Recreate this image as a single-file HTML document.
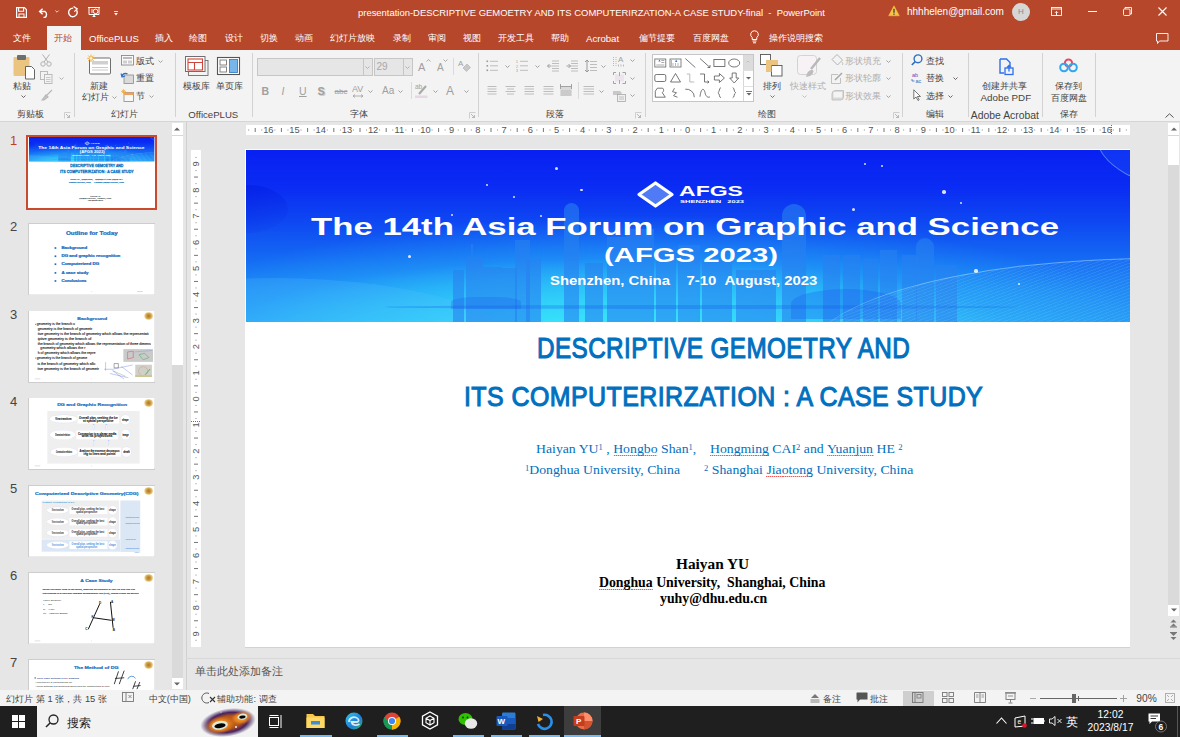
<!DOCTYPE html>
<html><head><meta charset="utf-8">
<style>
*{margin:0;padding:0;box-sizing:border-box}
html,body{width:1180px;height:737px;overflow:hidden;background:#E6E6E6;font-family:"Liberation Sans",sans-serif;position:relative}
.a{position:absolute}
.t{white-space:nowrap}
svg{overflow:visible}
sup{font-size:0.62em;vertical-align:0.42em;line-height:0}
</style></head><body>

<div class="a" style="left:0px;top:0px;width:1180px;height:50px;background:#B7472A"></div>
<svg class="a" style="left:16px;top:7px;" width="11" height="11" viewBox="0 0 11 11"><path d="M0.6 0.6H8.4L10.4 2.6V10.4H0.6Z" fill="none" stroke="#fff" stroke-width="1.2"/><path d="M2.6 0.6V4.2H7.6V0.6" fill="none" stroke="#fff" stroke-width="1.1"/><rect x="3" y="7" width="5" height="3.4" fill="none" stroke="#fff" stroke-width="1"/></svg>
<svg class="a" style="left:37.5px;top:7.5px;" width="12" height="10" viewBox="0 0 12 10"><path d="M2 3.5H7A3.6 3.6 0 0 1 7 9.4H5.5" fill="none" stroke="#fff" stroke-width="1.4"/><path d="M4.6 0.8L1.6 3.5L4.6 6.2" fill="none" stroke="#fff" stroke-width="1.4"/></svg>
<svg class="a" style="left:54.5px;top:10px;" width="4" height="3" viewBox="0 0 4 3"><path d="M0.4 0.6L2 2.2L3.6 0.6" fill="none" stroke="#fff" stroke-width="0.8"/></svg>
<svg class="a" style="left:67.5px;top:7px;" width="11" height="10" viewBox="0 0 11 10"><path d="M8.6 3.2A4.3 4.3 0 1 1 5.2 1.1" fill="none" stroke="#fff" stroke-width="1.4"/><path d="M5.6 -0.4L9.2 1.9L6.3 4.6" fill="none" stroke="#fff" stroke-width="1.2"/></svg>
<svg class="a" style="left:88px;top:7px;" width="12" height="10" viewBox="0 0 12 10"><path d="M0 0.5H12M1 0.5V7.5H11V0.5" fill="none" stroke="#fff" stroke-width="1"/><circle cx="7.6" cy="4.4" r="2.3" fill="none" stroke="#fff" stroke-width="1"/><path d="M3 3H5.5M3 5H5" stroke="#fff" stroke-width="0.9"/><path d="M4.2 10L6 7.5L7.8 10Z" fill="#fff"/></svg>
<svg class="a" style="left:113.5px;top:10.5px;" width="4" height="5" viewBox="0 0 4 5"><path d="M0 0.5H4" stroke="#fff" stroke-width="0.8"/><path d="M0.2 2L2 4.6L3.8 2Z" fill="#fff"/></svg>
<div class="a t " style="left:358px;top:6.69px;font-size:9.45px;line-height:11.81px;color:#FFFFFF;">presentation-DESCRIPTIVE GEMOETRY AND ITS COMPUTERIRZATION-A CASE STUDY-final&nbsp; -&nbsp; PowerPoint</div>
<svg class="a" style="left:888px;top:5px;" width="12" height="12" viewBox="0 0 12 12"><path d="M6 0.8L11.3 10.8H0.7Z" fill="#F6C443" stroke="#F6C443" stroke-width="0.5"/><rect x="5.4" y="3.8" width="1.2" height="4" fill="#333"/><rect x="5.4" y="8.6" width="1.2" height="1.2" fill="#333"/></svg>
<div class="a t " style="left:907px;top:6.35px;font-size:10px;line-height:12.5px;color:#FFFFFF;">hhhhelen@gmail.com</div>
<div class="a" style="left:1012px;top:2.5px;width:18px;height:18px;background:#D6D6D6;border-radius:50%"></div>
<div class="a t" style="left:1012.0px;width:18px;text-align:center;top:6.70px;font-size:8px;line-height:10.0px;color:#8A8A8A;">H</div>
<svg class="a" style="left:1051px;top:7px;" width="11" height="9" viewBox="0 0 11 9"><rect x="0.5" y="0.5" width="10" height="8" fill="none" stroke="#fff" stroke-width="0.9"/><path d="M0.5 2H10.5" stroke="#fff" stroke-width="0.9"/><path d="M5.5 8V4.5M4 5.8L5.5 4.3L7 5.8" fill="none" stroke="#fff" stroke-width="0.9"/></svg>
<div class="a" style="left:1088px;top:11px;width:9px;height:1px;background:#fff"></div>
<svg class="a" style="left:1123px;top:7px;" width="9" height="9" viewBox="0 0 9 9"><rect x="0.5" y="2" width="6.5" height="6.5" rx="1" fill="none" stroke="#fff" stroke-width="0.9"/><path d="M2 2V0.5H8.5V7H7" fill="none" stroke="#fff" stroke-width="0.9"/></svg>
<svg class="a" style="left:1158px;top:7px;" width="9" height="9" viewBox="0 0 9 9"><path d="M0.5 0.5L8.5 8.5M8.5 0.5L0.5 8.5" stroke="#fff" stroke-width="1.1"/></svg>
<div class="a" style="left:47px;top:26px;width:34px;height:24px;background:#F3F3F3"></div>
<div class="a t " style="left:13.2px;top:32.99px;font-size:9.3px;line-height:11.62px;color:#FFFFFF;">文件</div>
<div class="a t " style="left:54px;top:32.99px;font-size:9.3px;line-height:11.62px;color:#B7472A;">开始</div>
<div class="a t " style="left:89px;top:32.80px;font-size:9.6px;line-height:12.0px;color:#FFFFFF;">OfficePLUS</div>
<div class="a t " style="left:154.6px;top:32.99px;font-size:9.3px;line-height:11.62px;color:#FFFFFF;">插入</div>
<div class="a t " style="left:189.4px;top:32.99px;font-size:9.3px;line-height:11.62px;color:#FFFFFF;">绘图</div>
<div class="a t " style="left:225px;top:32.99px;font-size:9.3px;line-height:11.62px;color:#FFFFFF;">设计</div>
<div class="a t " style="left:260px;top:32.99px;font-size:9.3px;line-height:11.62px;color:#FFFFFF;">切换</div>
<div class="a t " style="left:294.5px;top:32.99px;font-size:9.3px;line-height:11.62px;color:#FFFFFF;">动画</div>
<div class="a t " style="left:330px;top:32.99px;font-size:9.3px;line-height:11.62px;color:#FFFFFF;">幻灯片放映</div>
<div class="a t " style="left:393px;top:32.99px;font-size:9.3px;line-height:11.62px;color:#FFFFFF;">录制</div>
<div class="a t " style="left:428px;top:32.99px;font-size:9.3px;line-height:11.62px;color:#FFFFFF;">审阅</div>
<div class="a t " style="left:462.5px;top:32.99px;font-size:9.3px;line-height:11.62px;color:#FFFFFF;">视图</div>
<div class="a t " style="left:497.5px;top:32.99px;font-size:9.3px;line-height:11.62px;color:#FFFFFF;">开发工具</div>
<div class="a t " style="left:551px;top:32.99px;font-size:9.3px;line-height:11.62px;color:#FFFFFF;">帮助</div>
<div class="a t " style="left:586px;top:32.80px;font-size:9.6px;line-height:12.0px;color:#FFFFFF;">Acrobat</div>
<div class="a t " style="left:638.5px;top:32.99px;font-size:9.3px;line-height:11.62px;color:#FFFFFF;">偏节提要</div>
<div class="a t " style="left:693px;top:32.99px;font-size:9.3px;line-height:11.62px;color:#FFFFFF;">百度网盘</div>
<div class="a t " style="left:769px;top:32.99px;font-size:9.3px;line-height:11.62px;color:#FFFFFF;">操作说明搜索</div>
<svg class="a" style="left:750px;top:30px;" width="9" height="14" viewBox="0 0 9 14"><path d="M4.5 0.8A3.7 3.7 0 0 1 6.8 7.5V9.5H2.2V7.5A3.7 3.7 0 0 1 4.5 0.8Z" fill="none" stroke="#fff" stroke-width="1"/><path d="M2.5 11H6.5M3 12.8H6" stroke="#fff" stroke-width="1"/></svg>
<svg class="a" style="left:1156px;top:33px;" width="13" height="11" viewBox="0 0 13 11"><path d="M0.5 0.5H12V8H3.5L1.5 10.5V8H0.5Z" fill="none" stroke="#fff" stroke-width="0.9"/></svg>
<div class="a" style="left:0px;top:50px;width:1180px;height:71px;background:#F3F3F3"></div>
<div class="a" style="left:0px;top:121px;width:1180px;height:1px;background:#D5D5D5"></div>
<div class="a" style="left:73.5px;top:53px;width:1px;height:64px;background:#D2D2D2"></div>
<div class="a" style="left:174.6px;top:53px;width:1px;height:64px;background:#D2D2D2"></div>
<div class="a" style="left:251.6px;top:53px;width:1px;height:64px;background:#D2D2D2"></div>
<div class="a" style="left:477.7px;top:53px;width:1px;height:64px;background:#D2D2D2"></div>
<div class="a" style="left:644.7px;top:53px;width:1px;height:64px;background:#D2D2D2"></div>
<div class="a" style="left:902.4px;top:53px;width:1px;height:64px;background:#D2D2D2"></div>
<div class="a" style="left:968.3px;top:53px;width:1px;height:64px;background:#D2D2D2"></div>
<div class="a" style="left:1042.4px;top:53px;width:1px;height:64px;background:#D2D2D2"></div>
<div class="a" style="left:1094.6px;top:53px;width:1px;height:64px;background:#D2D2D2"></div>
<svg class="a" style="left:12px;top:54px;" width="24" height="26" viewBox="0 0 24 26"><rect x="1.5" y="3" width="16" height="19" rx="1" fill="#EBC47F"/><rect x="5" y="1" width="9" height="5" rx="1" fill="#6E6E6E"/><path d="M13.5 12.5H19.5L22.5 15.5V25H13.5Z" fill="#fff" stroke="#555" stroke-width="0.9"/></svg>
<div class="a t " style="left:13px;top:80.99px;font-size:9.3px;line-height:11.62px;color:#444444;">粘贴</div>
<svg class="a" style="left:20.5px;top:95.0px;" width="5" height="3" viewBox="0 0 5 3"><path d="M0.5 0.5L2.5 2.5L4.5 0.5" fill="none" stroke="#555" stroke-width="0.9"/></svg>
<svg class="a" style="left:40px;top:54px;" width="12" height="13" viewBox="0 0 12 13"><circle cx="3" cy="10" r="2.2" fill="none" stroke="#B0B0B0" stroke-width="1"/><circle cx="9" cy="10" r="2.2" fill="none" stroke="#B0B0B0" stroke-width="1"/><path d="M4 8L9.5 0.5M8 8L2.5 0.5" stroke="#B0B0B0" stroke-width="1"/></svg>
<svg class="a" style="left:40px;top:71px;" width="13" height="13" viewBox="0 0 13 13"><rect x="0.5" y="0.5" width="7" height="8" fill="#F3F3F3" stroke="#B5B5B5" stroke-width="0.9"/><rect x="4.5" y="3.5" width="7.5" height="9" fill="#F3F3F3" stroke="#B5B5B5" stroke-width="0.9"/><path d="M6 6.5H10.5M6 8.5H10.5M6 10.5H10.5" stroke="#B5B5B5" stroke-width="0.7"/></svg>
<svg class="a" style="left:58.5px;top:76.5px;" width="5" height="3" viewBox="0 0 5 3"><path d="M0.5 0.5L2.5 2.5L4.5 0.5" fill="none" stroke="#AAA" stroke-width="0.9"/></svg>
<svg class="a" style="left:41px;top:89px;" width="12" height="12" viewBox="0 0 12 12"><path d="M6 6L11 1M1 11L5 6L7 8L3 11Z" fill="#C5C5C5" stroke="#B8B8B8" stroke-width="1.2"/></svg>
<div class="a t " style="left:16.8px;top:109.19px;font-size:9.3px;line-height:11.62px;color:#444444;">剪贴板</div>
<svg class="a" style="left:63.5px;top:111.5px;" width="7" height="7" viewBox="0 0 7 7"><path d="M0.5 6.5V0.5H6.5" fill="none" stroke="#C4C4C4" stroke-width="0.8"/><path d="M2 2L5.5 5.5M5.5 3V5.5H3" fill="none" stroke="#A8A8A8" stroke-width="0.8"/></svg>
<svg class="a" style="left:86px;top:54px;" width="26" height="22" viewBox="0 0 26 22"><rect x="3.5" y="4" width="21" height="16" rx="1" fill="#fff" stroke="#6E6E6E" stroke-width="1"/><rect x="6" y="7" width="16" height="3.5" fill="#D0D0D0"/><path d="M6 13.5H22M6 16H22" stroke="#BDBDBD" stroke-width="0.8"/><g stroke="#F0B040" stroke-width="1"><path d="M5 0.5V8M1.2 4.3H8.8M2.3 1.6L7.7 7M7.7 1.6L2.3 7"/></g><circle cx="5" cy="4.3" r="1.8" fill="#FFF3D6" stroke="#F0B040" stroke-width="0.6"/></svg>
<div class="a t " style="left:90px;top:80.99px;font-size:9.3px;line-height:11.62px;color:#444444;">新建</div>
<div class="a t " style="left:81.6px;top:92.49px;font-size:9.3px;line-height:11.62px;color:#444444;">幻灯片</div>
<svg class="a" style="left:111.5px;top:96.0px;" width="5" height="3" viewBox="0 0 5 3"><path d="M0.5 0.5L2.5 2.5L4.5 0.5" fill="none" stroke="#999" stroke-width="0.9"/></svg>
<svg class="a" style="left:121px;top:55px;" width="13" height="11" viewBox="0 0 13 11"><rect x="0.5" y="0.5" width="12" height="9.5" fill="#FAFAFA" stroke="#8A8A8A" stroke-width="0.9"/><rect x="2" y="2" width="9" height="2" fill="#BBB"/><rect x="2" y="5.5" width="4" height="3" fill="#CFCFCF"/><rect x="7" y="5.5" width="4" height="3" fill="#CFCFCF"/></svg>
<div class="a t " style="left:136px;top:56.19px;font-size:9.3px;line-height:11.62px;color:#444444;">版式</div>
<svg class="a" style="left:157.5px;top:60.0px;" width="5" height="3" viewBox="0 0 5 3"><path d="M0.5 0.5L2.5 2.5L4.5 0.5" fill="none" stroke="#999" stroke-width="0.9"/></svg>
<svg class="a" style="left:121px;top:72px;" width="13" height="12" viewBox="0 0 13 12"><rect x="3" y="3" width="9.5" height="8.5" fill="#DADADA" stroke="#8A8A8A" stroke-width="0.8"/><path d="M1 4.5A3.5 3.5 0 0 1 6.5 2" fill="none" stroke="#2F6FC1" stroke-width="1.3"/><path d="M0 1.5L1 5L4 4" fill="none" stroke="#2F6FC1" stroke-width="1.1"/></svg>
<div class="a t " style="left:136px;top:73.39px;font-size:9.3px;line-height:11.62px;color:#444444;">重置</div>
<svg class="a" style="left:121px;top:89px;" width="13" height="13" viewBox="0 0 13 13"><rect x="3" y="3.5" width="9.5" height="9" fill="#F8F8F8" stroke="#8A8A8A" stroke-width="0.8"/><rect x="3" y="3.5" width="9.5" height="2.5" fill="#F0A060"/><g stroke="#F0B040" stroke-width="0.8"><path d="M2.5 0V5M0 2.5H5M0.8 0.8L4.2 4.2M4.2 0.8L0.8 4.2"/></g></svg>
<div class="a t " style="left:136px;top:90.99px;font-size:9.3px;line-height:11.62px;color:#444444;">节</div>
<svg class="a" style="left:148.5px;top:94.5px;" width="5" height="3" viewBox="0 0 5 3"><path d="M0.5 0.5L2.5 2.5L4.5 0.5" fill="none" stroke="#999" stroke-width="0.9"/></svg>
<div class="a t " style="left:110.6px;top:109.19px;font-size:9.3px;line-height:11.62px;color:#444444;">幻灯片</div>
<svg class="a" style="left:185px;top:56px;" width="24" height="20" viewBox="0 0 24 20"><rect x="3.5" y="4.5" width="19.5" height="15" fill="#F3F3F3" stroke="#6E6E6E" stroke-width="0.9"/><rect x="0.5" y="0.5" width="19.5" height="15" fill="#fff" stroke="#6E6E6E" stroke-width="1"/><rect x="3" y="3" width="14.5" height="11" fill="none" stroke="#D0453A" stroke-width="1.1"/><path d="M3 6.5H17.5M9.5 6.5V14" stroke="#D0453A" stroke-width="1.1"/></svg>
<svg class="a" style="left:217px;top:57px;" width="24" height="18" viewBox="0 0 24 18"><rect x="0.5" y="0.5" width="22" height="17" fill="#fff" stroke="#555" stroke-width="1.1"/><rect x="3" y="3" width="6.5" height="5" fill="#fff" stroke="#777" stroke-width="0.9"/><rect x="3" y="10" width="6.5" height="5" fill="#fff" stroke="#777" stroke-width="0.9"/><rect x="12.5" y="2.5" width="8" height="13" fill="#77B5EA" stroke="#3A82C8" stroke-width="0.9"/></svg>
<div class="a t " style="left:183.4px;top:80.99px;font-size:9.3px;line-height:11.62px;color:#444444;">模板库</div>
<div class="a t " style="left:215.5px;top:80.99px;font-size:9.3px;line-height:11.62px;color:#444444;">单页库</div>
<div class="a t " style="left:188.3px;top:109.00px;font-size:9.6px;line-height:12.0px;color:#444444;">OfficePLUS</div>
<div class="a" style="left:257px;top:58px;width:116px;height:18px;background:#E6E6E6;border:1px solid #C6C6C6"></div>
<div class="a" style="left:362.5px;top:58px;width:1px;height:18px;background:#C6C6C6"></div>
<svg class="a" style="left:365.0px;top:65.5px;" width="5" height="3" viewBox="0 0 5 3"><path d="M0.5 0.5L2.5 2.5L4.5 0.5" fill="none" stroke="#AAA" stroke-width="0.9"/></svg>
<div class="a" style="left:374.3px;top:58px;width:38.5px;height:18px;background:#E6E6E6;border:1px solid #C6C6C6"></div>
<div class="a" style="left:402.5px;top:58px;width:1px;height:18px;background:#C6C6C6"></div>
<svg class="a" style="left:405.0px;top:65.5px;" width="5" height="3" viewBox="0 0 5 3"><path d="M0.5 0.5L2.5 2.5L4.5 0.5" fill="none" stroke="#AAA" stroke-width="0.9"/></svg>
<div class="a t " style="left:376.5px;top:61.25px;font-size:10px;line-height:12.5px;color:#A8A8A8;">29</div>
<div class="a t " style="left:418px;top:60.62px;font-size:11px;line-height:13.75px;color:#A0A0A0;">A</div>
<div class="a t " style="left:437px;top:62.25px;font-size:10px;line-height:12.5px;color:#A0A0A0;">A</div>
<svg class="a" style="left:426px;top:59px;" width="5" height="3" viewBox="0 0 5 3"><path d="M0.5 2.5L2.5 0.5L4.5 2.5" fill="none" stroke="#999" stroke-width="0.8"/></svg>
<svg class="a" style="left:443px;top:59px;" width="5" height="3" viewBox="0 0 5 3"><path d="M0.5 0.5L2.5 2.5L4.5 0.5" fill="none" stroke="#999" stroke-width="0.8"/></svg>
<div class="a" style="left:452.6px;top:58px;width:1px;height:17px;background:#DADADA"></div>
<svg class="a" style="left:458px;top:59px;" width="13" height="13" viewBox="0 0 13 13"><text x="0" y="7" font-size="8" fill="#A0A0A0" font-family="Liberation Sans">A</text><path d="M5 9L9 5L12.5 8.5L8.5 12.5Z" fill="#C8C8C8" stroke="#B5B5B5" stroke-width="0.7"/></svg>
<div class="a t " style="left:261.5px;top:84.84px;font-size:10.5px;line-height:13.12px;color:#A0A0A0;font-weight:bold">B</div>
<div class="a t " style="left:281.5px;top:84.84px;font-size:10.5px;line-height:13.12px;color:#A0A0A0;font-style:italic">I</div>
<div class="a t " style="left:299px;top:84.84px;font-size:10.5px;line-height:13.12px;color:#A0A0A0;text-decoration:underline">U</div>
<div class="a t " style="left:317.5px;top:84.53px;font-size:11px;line-height:13.75px;color:#A0A0A0;font-weight:bold;text-shadow:1px 1px 0 #CFCFCF">S</div>
<div class="a t " style="left:334.5px;top:86.80px;font-size:8px;line-height:10.0px;color:#A0A0A0;text-decoration:line-through">abc</div>
<div class="a t " style="left:352px;top:84.17px;font-size:9px;line-height:11.25px;color:#A0A0A0;">AV</div>
<svg class="a" style="left:352px;top:94px;" width="12" height="4" viewBox="0 0 12 4"><path d="M1 2H11M1 2L3 0.5M1 2L3 3.5M11 2L9 0.5M11 2L9 3.5" fill="none" stroke="#A0A0A0" stroke-width="0.8"/></svg>
<svg class="a" style="left:368.0px;top:89.5px;" width="5" height="3" viewBox="0 0 5 3"><path d="M0.5 0.5L2.5 2.5L4.5 0.5" fill="none" stroke="#999" stroke-width="0.9"/></svg>
<div class="a t " style="left:382px;top:85.15px;font-size:10px;line-height:12.5px;color:#A0A0A0;">Aa</div>
<svg class="a" style="left:397.5px;top:89.5px;" width="5" height="3" viewBox="0 0 5 3"><path d="M0.5 0.5L2.5 2.5L4.5 0.5" fill="none" stroke="#999" stroke-width="0.9"/></svg>
<div class="a" style="left:410.5px;top:82px;width:1px;height:17px;background:#DADADA"></div>
<svg class="a" style="left:415px;top:83px;" width="14" height="15" viewBox="0 0 14 15"><text x="0" y="6" font-size="6.5" fill="#A0A0A0" font-family="Liberation Sans">ab</text><path d="M4 11L11 3" stroke="#A8A8A8" stroke-width="2"/><rect x="0" y="12.5" width="12.5" height="2.5" fill="#E5D8E5"/></svg>
<svg class="a" style="left:433.1px;top:89.5px;" width="5" height="3" viewBox="0 0 5 3"><path d="M0.5 0.5L2.5 2.5L4.5 0.5" fill="none" stroke="#999" stroke-width="0.9"/></svg>
<div class="a t " style="left:446px;top:83.90px;font-size:12px;line-height:15.0px;color:#A0A0A0;">A</div>
<svg class="a" style="left:463.5px;top:89.5px;" width="5" height="3" viewBox="0 0 5 3"><path d="M0.5 0.5L2.5 2.5L4.5 0.5" fill="none" stroke="#999" stroke-width="0.9"/></svg>
<div class="a t " style="left:349.5px;top:109.19px;font-size:9.3px;line-height:11.62px;color:#444444;">字体</div>
<svg class="a" style="left:468.5px;top:111.5px;" width="7" height="7" viewBox="0 0 7 7"><path d="M0.5 6.5V0.5H6.5" fill="none" stroke="#C4C4C4" stroke-width="0.8"/><path d="M2 2L5.5 5.5M5.5 3V5.5H3" fill="none" stroke="#A8A8A8" stroke-width="0.8"/></svg>
<svg class="a" style="left:486px;top:60px;" width="13" height="12" viewBox="0 0 13 12"><rect x="0.5" y="0.5" width="1.6" height="1.6" fill="#999"/><rect x="0.5" y="5" width="1.6" height="1.6" fill="#999"/><rect x="0.5" y="9.5" width="1.6" height="1.6" fill="#999"/><path d="M4 1.3H12M4 5.8H12M4 10.3H12" stroke="#BDBDBD" stroke-width="1"/></svg>
<svg class="a" style="left:504.5px;top:65.0px;" width="5" height="3" viewBox="0 0 5 3"><path d="M0.5 0.5L2.5 2.5L4.5 0.5" fill="none" stroke="#999" stroke-width="0.9"/></svg>
<svg class="a" style="left:516px;top:60px;" width="13" height="12" viewBox="0 0 13 12"><text x="0" y="3" font-size="3.5" fill="#999">1</text><text x="0" y="7.5" font-size="3.5" fill="#999">2</text><text x="0" y="12" font-size="3.5" fill="#999">3</text><path d="M4 1.3H12M4 5.8H12M4 10.3H12" stroke="#BDBDBD" stroke-width="1"/></svg>
<svg class="a" style="left:534.5px;top:65.0px;" width="5" height="3" viewBox="0 0 5 3"><path d="M0.5 0.5L2.5 2.5L4.5 0.5" fill="none" stroke="#999" stroke-width="0.9"/></svg>
<svg class="a" style="left:547px;top:60px;" width="13" height="12" viewBox="0 0 13 12"><path d="M5 1.0H12M5 3.5H12M5 6.0H12M5 8.5H12M5 11.0H12" stroke="#BDBDBD" stroke-width="1"/><path d="M0.5 6H4.5M0.5 6L2.5 4M0.5 6L2.5 8" fill="none" stroke="#999" stroke-width="0.9"/></svg>
<svg class="a" style="left:566px;top:60px;" width="13" height="12" viewBox="0 0 13 12"><path d="M5 1.0H12M5 3.5H12M5 6.0H12M5 8.5H12M5 11.0H12" stroke="#BDBDBD" stroke-width="1"/><path d="M0.5 6H4.5M4.5 6L2.5 4M4.5 6L2.5 8" fill="none" stroke="#999" stroke-width="0.9"/></svg>
<svg class="a" style="left:585px;top:59px;" width="12" height="14" viewBox="0 0 12 14"><path d="M5 2.5H12M5 5.5H12M5 8.5H12M5 11.5H12" stroke="#BDBDBD" stroke-width="1"/><path d="M2 1V13M0 3L2 1L4 3M0 11L2 13L4 11" fill="none" stroke="#999" stroke-width="1"/></svg>
<svg class="a" style="left:600.5px;top:65.0px;" width="5" height="3" viewBox="0 0 5 3"><path d="M0.5 0.5L2.5 2.5L4.5 0.5" fill="none" stroke="#999" stroke-width="0.9"/></svg>
<svg class="a" style="left:613px;top:55px;" width="12" height="12" viewBox="0 0 12 12"><path d="M0.5 2V11.5M3 2V11.5" stroke="#AAA" stroke-width="0.8" stroke-dasharray="1 1"/><text x="5" y="7" font-size="8" fill="#A0A0A0">A</text><path d="M5.5 9.5V11.5M8 9.5V11.5M10.5 9.5V11.5" stroke="#AAA" stroke-width="0.8"/></svg>
<svg class="a" style="left:629.5px;top:59.2px;" width="5" height="3" viewBox="0 0 5 3"><path d="M0.5 0.5L2.5 2.5L4.5 0.5" fill="none" stroke="#999" stroke-width="0.9"/></svg>
<svg class="a" style="left:613px;top:72px;" width="13" height="12" viewBox="0 0 13 12"><path d="M0.5 3V0.5H3M9.5 0.5H12.5V3M12.5 9V11.5H9.5M3 11.5H0.5V9" fill="none" stroke="#999" stroke-width="0.9"/><rect x="2" y="2.5" width="9" height="7" fill="#ECE4EC"/><path d="M6.5 0V4M6.5 8V12" stroke="#999" stroke-width="0.8"/></svg>
<svg class="a" style="left:629.5px;top:76.5px;" width="5" height="3" viewBox="0 0 5 3"><path d="M0.5 0.5L2.5 2.5L4.5 0.5" fill="none" stroke="#999" stroke-width="0.9"/></svg>
<svg class="a" style="left:613px;top:90px;" width="13" height="12" viewBox="0 0 13 12"><path d="M0 1H7L9 3L7 5H0Z" fill="#C8C8C8"/><rect x="4.5" y="4.5" width="8" height="7" fill="#F0F0F0" stroke="#A8A8A8" stroke-width="0.8"/><path d="M6 7H11M6 9H11" stroke="#AAA" stroke-width="0.7"/></svg>
<svg class="a" style="left:629.5px;top:94.3px;" width="5" height="3" viewBox="0 0 5 3"><path d="M0.5 0.5L2.5 2.5L4.5 0.5" fill="none" stroke="#999" stroke-width="0.9"/></svg>
<svg class="a" style="left:487px;top:85px;" width="11" height="11" viewBox="0 0 11 11"><path d="M0.5 1.5H9.5M0.5 4.0H9.5M0.5 6.5H9.5M0.5 9.0H9.5" stroke="#BDBDBD" stroke-width="1"/></svg>
<svg class="a" style="left:505px;top:85px;" width="12" height="11" viewBox="0 0 12 11"><path d="M0.5 1.5H10.5" stroke="#BDBDBD" stroke-width="1"/><path d="M2 4.0H9" stroke="#BDBDBD" stroke-width="1"/><path d="M0.5 6.5H10.5" stroke="#BDBDBD" stroke-width="1"/><path d="M2 9.0H9" stroke="#BDBDBD" stroke-width="1"/></svg>
<svg class="a" style="left:524px;top:85px;" width="11" height="11" viewBox="0 0 11 11"><path d="M0.5 1.5H10.0M0.5 4.0H10.0M0.5 6.5H10.0M0.5 9.0H10.0" stroke="#BDBDBD" stroke-width="1"/></svg>
<svg class="a" style="left:543px;top:85px;" width="11" height="11" viewBox="0 0 11 11"><path d="M0.5 1.5H10.5M0.5 4.0H10.5M0.5 6.5H10.5M0.5 9.0H10.5" stroke="#BDBDBD" stroke-width="1"/></svg>
<svg class="a" style="left:560px;top:84px;" width="12" height="13" viewBox="0 0 12 13"><rect x="0.5" y="3" width="11" height="9" fill="#DADADA"/><path d="M0.5 0V5M11.5 0V5M0.5 2.5H11.5" stroke="#999" stroke-width="0.9"/><path d="M0.5 7H11.5M0.5 9H11.5M0.5 11H11.5" stroke="#BBB" stroke-width="1"/></svg>
<div class="a" style="left:577.6px;top:82px;width:1px;height:17px;background:#DADADA"></div>
<svg class="a" style="left:583px;top:85px;" width="12" height="11" viewBox="0 0 12 11"><path d="M0.5 1.5H11.0M0.5 4.0H11.0M0.5 6.5H11.0M0.5 9.0H11.0" stroke="#BDBDBD" stroke-width="1"/></svg>
<svg class="a" style="left:599.1px;top:89.5px;" width="5" height="3" viewBox="0 0 5 3"><path d="M0.5 0.5L2.5 2.5L4.5 0.5" fill="none" stroke="#999" stroke-width="0.9"/></svg>
<div class="a t " style="left:546px;top:109.19px;font-size:9.3px;line-height:11.62px;color:#444444;">段落</div>
<svg class="a" style="left:635.1px;top:111.5px;" width="7" height="7" viewBox="0 0 7 7"><path d="M0.5 6.5V0.5H6.5" fill="none" stroke="#C4C4C4" stroke-width="0.8"/><path d="M2 2L5.5 5.5M5.5 3V5.5H3" fill="none" stroke="#A8A8A8" stroke-width="0.8"/></svg>
<div class="a" style="left:652.3px;top:54.3px;width:101.5px;height:47.5px;background:#fff;border:1px solid #C6C6C6"></div>
<div class="a" style="left:742.6px;top:54.8px;width:10.5px;height:15.5px;background:#DCDCDC"></div>
<div class="a" style="left:742.6px;top:54.8px;width:1px;height:46.5px;background:#D8D8D8"></div>
<div class="a" style="left:743px;top:70.3px;width:10px;height:1px;background:#E0E0E0"></div>
<div class="a" style="left:743px;top:86px;width:10px;height:1px;background:#E0E0E0"></div>
<svg class="a" style="left:746px;top:60px;" width="4" height="3" viewBox="0 0 4 3"><path d="M0.5 2.5L2 1L3.5 2.5" fill="none" stroke="#BBB" stroke-width="0.8"/></svg>
<svg class="a" style="left:746px;top:77px;" width="5" height="3" viewBox="0 0 5 3"><path d="M0 0L2.5 2.5L5 0Z" fill="#666"/></svg>
<svg class="a" style="left:745.5px;top:91px;" width="6" height="5" viewBox="0 0 6 5"><path d="M0 0.5H6" stroke="#666" stroke-width="0.9"/><path d="M0.5 2L3 4.5L5.5 2Z" fill="#666"/></svg>
<svg class="a" style="left:650px;top:54px;" width="95" height="48" viewBox="0 0 95 48"><g transform="translate(10.299999999999955 9)"><rect x="-5.5" y="-4" width="11" height="8" fill="none" stroke="#666" stroke-width="0.8"/><path d="M-2 -1.5L-0.8 -3.5L0.4 -1.5Z" fill="#3A7BD5"/><path d="M1 -2.5H4M1 -0.5H4M-4 2H4" stroke="#888" stroke-width="0.7"/></g><g transform="translate(25.5 9)"><rect x="-5.5" y="-4" width="11" height="8" fill="none" stroke="#666" stroke-width="0.8"/><path d="M-0.5 -1L0.7 -3.5L1.9 -1Z" fill="#3A7BD5"/><path d="M-4 -3V3M-2.5 0V3M0 0V3M2.5 0V3" stroke="#888" stroke-width="0.6"/></g><g transform="translate(40.299999999999955 9)"><path d="M-5 -4.5L5 4.5" stroke="#555" stroke-width="0.8"/></g><g transform="translate(55 9)"><path d="M-5 -4.5L5 4.5M5 4.5V2M5 4.5H2.5" fill="none" stroke="#555" stroke-width="0.8"/></g><g transform="translate(69.39999999999998 9)"><rect x="-5.5" y="-3.5" width="11" height="7" fill="none" stroke="#555" stroke-width="0.8"/></g><g transform="translate(84.20000000000005 9)"><ellipse cx="0" cy="0" rx="5.5" ry="4" fill="none" stroke="#555" stroke-width="0.8"/></g><g transform="translate(10.299999999999955 24)"><rect x="-5.5" y="-3.5" width="11" height="7" rx="1.5" fill="none" stroke="#555" stroke-width="0.8"/></g><g transform="translate(25.5 24)"><path d="M0 -4.5L5 4H-5Z" fill="none" stroke="#555" stroke-width="0.8"/></g><g transform="translate(40.299999999999955 24)"><path d="M-3.5 -4H-0.5V4H4" fill="none" stroke="#AAA" stroke-width="0.8"/></g><g transform="translate(55 24)"><path d="M-5 -4H-0.5V4H4M4 4L2.5 2.8M4 4L2.5 5.2" fill="none" stroke="#555" stroke-width="0.8"/></g><g transform="translate(69.39999999999998 24)"><path d="M-5 -2H0V-4.5L5 0L0 4.5V2H-5Z" fill="none" stroke="#555" stroke-width="0.8"/></g><g transform="translate(84.20000000000005 24)"><path d="M-2 -5H2V0H4.5L0 5L-4.5 0H-2Z" fill="none" stroke="#555" stroke-width="0.8"/></g><g transform="translate(10.299999999999955 38.7)"><path d="M-5 -1.5L-3 -4.5H2.5A3 3 0 0 1 2 0L5 4.5H-5Z" fill="none" stroke="#555" stroke-width="0.8"/></g><g transform="translate(25.5 38.7)"><path d="M-1 -4.5L-3 -1L1 0L-2 3L2 4.5" fill="none" stroke="#555" stroke-width="0.8"/></g><g transform="translate(40.299999999999955 38.7)"><path d="M-5 -3.5A8 8 0 0 1 4 4.5" fill="none" stroke="#555" stroke-width="0.8"/></g><g transform="translate(55 38.7)"><path d="M-5 4C-4 -5 -1 -5 0 0S4 5 5 4" fill="none" stroke="#555" stroke-width="0.8"/></g><g transform="translate(69.39999999999998 38.7)"><path d="M1.5 -5C-0.5 -5 0.5 -0.5 -1.5 0C0.5 0.5 -0.5 5 1.5 5" fill="none" stroke="#555" stroke-width="0.8"/></g><g transform="translate(84.20000000000005 38.7)"><path d="M-1.5 -5C0.5 -5 -0.5 -0.5 1.5 0C-0.5 0.5 0.5 5 -1.5 5" fill="none" stroke="#555" stroke-width="0.8"/></g></svg>
<svg class="a" style="left:760px;top:54px;" width="24" height="24" viewBox="0 0 24 24"><rect x="0.5" y="0.5" width="10" height="10" fill="#fff" stroke="#555" stroke-width="0.9"/><rect x="6" y="6" width="12" height="12" fill="#EBC47F"/><rect x="11.5" y="11.5" width="10.5" height="10.5" fill="#fff" stroke="#555" stroke-width="0.9"/><rect x="6" y="11" width="5.5" height="7" fill="#EBC47F"/></svg>
<div class="a t " style="left:763px;top:80.99px;font-size:9.3px;line-height:11.62px;color:#444444;">排列</div>
<svg class="a" style="left:769.5px;top:95.0px;" width="5" height="3" viewBox="0 0 5 3"><path d="M0.5 0.5L2.5 2.5L4.5 0.5" fill="none" stroke="#666" stroke-width="0.9"/></svg>
<svg class="a" style="left:797px;top:55px;" width="25" height="24" viewBox="0 0 25 24"><rect x="0.5" y="0.5" width="19" height="19" rx="3" fill="#F6F2F6" stroke="#CFCFCF" stroke-width="0.9"/><path d="M23 3L14 14" stroke="#B8B8B8" stroke-width="2.4"/><path d="M9 22C10 17 12 15 15 15S16 19 13 21Z" fill="#BDBDBD"/></svg>
<div class="a t " style="left:790px;top:80.99px;font-size:9.3px;line-height:11.62px;color:#B0B0B0;">快速样式</div>
<svg class="a" style="left:801.5px;top:95.0px;" width="5" height="3" viewBox="0 0 5 3"><path d="M0.5 0.5L2.5 2.5L4.5 0.5" fill="none" stroke="#BBB" stroke-width="0.9"/></svg>
<svg class="a" style="left:831px;top:54px;" width="13" height="12" viewBox="0 0 13 12"><path d="M6 0.5L11.5 6L6.5 11L1 5.5Z" fill="none" stroke="#AAA" stroke-width="0.9"/><path d="M11 8Q12.5 10 11.5 11" fill="none" stroke="#BBB" stroke-width="0.9"/></svg>
<div class="a t " style="left:845.2px;top:55.69px;font-size:9.3px;line-height:11.62px;color:#B0B0B0;">形状填充</div>
<svg class="a" style="left:885.5px;top:59.5px;" width="5" height="3" viewBox="0 0 5 3"><path d="M0.5 0.5L2.5 2.5L4.5 0.5" fill="none" stroke="#999" stroke-width="0.9"/></svg>
<svg class="a" style="left:831px;top:72px;" width="13" height="12" viewBox="0 0 13 12"><path d="M0.5 2.5H7M0.5 2.5V11.5H9.5V6" fill="none" stroke="#BBB" stroke-width="0.9"/><path d="M4 8L11 1" stroke="#A8A8A8" stroke-width="1.6"/></svg>
<div class="a t " style="left:845.2px;top:73.19px;font-size:9.3px;line-height:11.62px;color:#B0B0B0;">形状轮廓</div>
<svg class="a" style="left:885.5px;top:77.0px;" width="5" height="3" viewBox="0 0 5 3"><path d="M0.5 0.5L2.5 2.5L4.5 0.5" fill="none" stroke="#999" stroke-width="0.9"/></svg>
<svg class="a" style="left:831px;top:90px;" width="13" height="11" viewBox="0 0 13 11"><path d="M4 0.5H12.5V7A3 3 0 0 1 9.5 10H1V4A3.5 3.5 0 0 1 4 0.5Z" fill="#D9D9D9" stroke="#BBB" stroke-width="0.8"/><rect x="2.5" y="2" width="8.5" height="5.5" fill="#F4F4F4"/></svg>
<div class="a t " style="left:845.2px;top:90.69px;font-size:9.3px;line-height:11.62px;color:#B0B0B0;">形状效果</div>
<svg class="a" style="left:885.5px;top:94.5px;" width="5" height="3" viewBox="0 0 5 3"><path d="M0.5 0.5L2.5 2.5L4.5 0.5" fill="none" stroke="#999" stroke-width="0.9"/></svg>
<div class="a t " style="left:758px;top:109.19px;font-size:9.3px;line-height:11.62px;color:#444444;">绘图</div>
<svg class="a" style="left:892.8px;top:111.5px;" width="7" height="7" viewBox="0 0 7 7"><path d="M0.5 6.5V0.5H6.5" fill="none" stroke="#C4C4C4" stroke-width="0.8"/><path d="M2 2L5.5 5.5M5.5 3V5.5H3" fill="none" stroke="#A8A8A8" stroke-width="0.8"/></svg>
<svg class="a" style="left:911px;top:54px;" width="12" height="12" viewBox="0 0 12 12"><circle cx="7" cy="4.8" r="3.9" fill="none" stroke="#2F6FC1" stroke-width="1.4"/><path d="M4.2 7.6L0.8 11" stroke="#2F6FC1" stroke-width="1.6"/></svg>
<div class="a t " style="left:926px;top:56.19px;font-size:9.3px;line-height:11.62px;color:#444444;">查找</div>
<svg class="a" style="left:911px;top:72px;" width="13" height="12" viewBox="0 0 13 12"><text x="1" y="5" font-size="5.5" fill="#7A3DB0" font-family="Liberation Sans">ab</text><text x="4.5" y="11" font-size="5.5" fill="#2F6FC1" font-family="Liberation Sans">ac</text><path d="M1 7V9H3.5" fill="none" stroke="#2F6FC1" stroke-width="0.8"/></svg>
<div class="a t " style="left:926px;top:73.39px;font-size:9.3px;line-height:11.62px;color:#444444;">替换</div>
<svg class="a" style="left:953.0px;top:77.0px;" width="5" height="3" viewBox="0 0 5 3"><path d="M0.5 0.5L2.5 2.5L4.5 0.5" fill="none" stroke="#555" stroke-width="0.9"/></svg>
<svg class="a" style="left:913px;top:89px;" width="9" height="12" viewBox="0 0 9 12"><path d="M0.8 0.8V10L3 8L5 11.5L6.2 10.8L4.3 7.5H7.5Z" fill="#fff" stroke="#555" stroke-width="0.8"/></svg>
<div class="a t " style="left:926px;top:90.99px;font-size:9.3px;line-height:11.62px;color:#444444;">选择</div>
<svg class="a" style="left:948.0px;top:94.5px;" width="5" height="3" viewBox="0 0 5 3"><path d="M0.5 0.5L2.5 2.5L4.5 0.5" fill="none" stroke="#555" stroke-width="0.9"/></svg>
<div class="a t " style="left:926px;top:109.19px;font-size:9.3px;line-height:11.62px;color:#444444;">编辑</div>
<svg class="a" style="left:997px;top:58px;" width="18" height="18" viewBox="0 0 18 18"><path d="M3 1H9.5L13 4.5V8" fill="none" stroke="#2F6FEB" stroke-width="1.4"/><path d="M3 1V15H7" fill="none" stroke="#2F6FEB" stroke-width="1.4"/><rect x="8" y="10" width="8" height="6.5" fill="none" stroke="#2F6FEB" stroke-width="1.3"/><path d="M12 13.5V7.5M10 9.5L12 7.5L14 9.5" fill="none" stroke="#2F6FEB" stroke-width="1.3"/></svg>
<div class="a t " style="left:982.4px;top:80.99px;font-size:9.3px;line-height:11.62px;color:#444444;">创建并共享</div>
<div class="a t " style="left:980.5px;top:92.38px;font-size:9.8px;line-height:12.25px;color:#444444;">Adobe PDF</div>
<div class="a t " style="left:970.8px;top:108.50px;font-size:10.4px;line-height:13.0px;color:#444444;">Adobe Acrobat</div>
<svg class="a" style="left:1059px;top:58px;" width="19" height="15" viewBox="0 0 19 15"><circle cx="9.5" cy="5" r="3.6" fill="none" stroke="#E84A5F" stroke-width="2"/><circle cx="5" cy="9.5" r="3.8" fill="none" stroke="#2FA8F0" stroke-width="2"/><circle cx="14" cy="9.5" r="3.8" fill="none" stroke="#2FA8F0" stroke-width="2"/></svg>
<div class="a t " style="left:1055px;top:80.99px;font-size:9.3px;line-height:11.62px;color:#444444;">保存到</div>
<div class="a t " style="left:1050.8px;top:92.69px;font-size:9.3px;line-height:11.62px;color:#444444;">百度网盘</div>
<div class="a t " style="left:1059.7px;top:109.19px;font-size:9.3px;line-height:11.62px;color:#444444;">保存</div>
<svg class="a" style="left:1165px;top:113px;" width="9" height="5" viewBox="0 0 9 5"><path d="M0.5 4.5L4.5 0.8L8.5 4.5" fill="none" stroke="#555" stroke-width="1"/></svg>
<div class="a" style="left:171.5px;top:123px;width:11px;height:565px;background:#DADADA"></div>
<div class="a" style="left:171.5px;top:123px;width:11px;height:11.5px;background:#fff"></div>
<svg class="a" style="left:174px;top:126.5px;" width="6" height="4" viewBox="0 0 6 4"><path d="M0 3.5L3 0.5L6 3.5Z" fill="#666"/></svg>
<div class="a" style="left:171.5px;top:135px;width:11px;height:230px;background:#fff;border-top:1px solid #D6D6D6"></div>
<div class="a" style="left:171.5px;top:678px;width:11px;height:10.5px;background:#fff"></div>
<svg class="a" style="left:174px;top:681.5px;" width="6" height="4" viewBox="0 0 6 4"><path d="M0 0.5L3 3.5L6 0.5Z" fill="#666"/></svg>
<div class="a" style="left:185.5px;top:122px;width:1px;height:568px;background:#D0D0D0"></div>
<div class="a" style="left:246px;top:125px;width:884px;height:10px;background:#fff"></div>
<svg class="a" style="left:246px;top:125px;" width="884" height="10" viewBox="0 0 884 10"><rect x="2.15" y="4.5" width="1" height="1" fill="#888"/><rect x="8.70" y="3" width="1" height="4" fill="#777"/><rect x="15.25" y="4.5" width="1" height="1" fill="#888"/><text x="22.30" y="8.3" font-size="9.3" fill="#555" text-anchor="middle" font-family="Liberation Sans">16</text><rect x="28.35" y="4.5" width="1" height="1" fill="#888"/><rect x="34.90" y="3" width="1" height="4" fill="#777"/><rect x="41.45" y="4.5" width="1" height="1" fill="#888"/><text x="48.50" y="8.3" font-size="9.3" fill="#555" text-anchor="middle" font-family="Liberation Sans">15</text><rect x="54.55" y="4.5" width="1" height="1" fill="#888"/><rect x="61.10" y="3" width="1" height="4" fill="#777"/><rect x="67.65" y="4.5" width="1" height="1" fill="#888"/><text x="74.70" y="8.3" font-size="9.3" fill="#555" text-anchor="middle" font-family="Liberation Sans">14</text><rect x="80.75" y="4.5" width="1" height="1" fill="#888"/><rect x="87.30" y="3" width="1" height="4" fill="#777"/><rect x="93.85" y="4.5" width="1" height="1" fill="#888"/><text x="100.90" y="8.3" font-size="9.3" fill="#555" text-anchor="middle" font-family="Liberation Sans">13</text><rect x="106.95" y="4.5" width="1" height="1" fill="#888"/><rect x="113.50" y="3" width="1" height="4" fill="#777"/><rect x="120.05" y="4.5" width="1" height="1" fill="#888"/><text x="127.10" y="8.3" font-size="9.3" fill="#555" text-anchor="middle" font-family="Liberation Sans">12</text><rect x="133.15" y="4.5" width="1" height="1" fill="#888"/><rect x="139.70" y="3" width="1" height="4" fill="#777"/><rect x="146.25" y="4.5" width="1" height="1" fill="#888"/><text x="153.30" y="8.3" font-size="9.3" fill="#555" text-anchor="middle" font-family="Liberation Sans">11</text><rect x="159.35" y="4.5" width="1" height="1" fill="#888"/><rect x="165.90" y="3" width="1" height="4" fill="#777"/><rect x="172.45" y="4.5" width="1" height="1" fill="#888"/><text x="179.50" y="8.3" font-size="9.3" fill="#555" text-anchor="middle" font-family="Liberation Sans">10</text><rect x="185.55" y="4.5" width="1" height="1" fill="#888"/><rect x="192.10" y="3" width="1" height="4" fill="#777"/><rect x="198.65" y="4.5" width="1" height="1" fill="#888"/><text x="205.70" y="8.3" font-size="9.3" fill="#555" text-anchor="middle" font-family="Liberation Sans">9</text><rect x="211.75" y="4.5" width="1" height="1" fill="#888"/><rect x="218.30" y="3" width="1" height="4" fill="#777"/><rect x="224.85" y="4.5" width="1" height="1" fill="#888"/><text x="231.90" y="8.3" font-size="9.3" fill="#555" text-anchor="middle" font-family="Liberation Sans">8</text><rect x="237.95" y="4.5" width="1" height="1" fill="#888"/><rect x="244.50" y="3" width="1" height="4" fill="#777"/><rect x="251.05" y="4.5" width="1" height="1" fill="#888"/><text x="258.10" y="8.3" font-size="9.3" fill="#555" text-anchor="middle" font-family="Liberation Sans">7</text><rect x="264.15" y="4.5" width="1" height="1" fill="#888"/><rect x="270.70" y="3" width="1" height="4" fill="#777"/><rect x="277.25" y="4.5" width="1" height="1" fill="#888"/><text x="284.30" y="8.3" font-size="9.3" fill="#555" text-anchor="middle" font-family="Liberation Sans">6</text><rect x="290.35" y="4.5" width="1" height="1" fill="#888"/><rect x="296.90" y="3" width="1" height="4" fill="#777"/><rect x="303.45" y="4.5" width="1" height="1" fill="#888"/><text x="310.50" y="8.3" font-size="9.3" fill="#555" text-anchor="middle" font-family="Liberation Sans">5</text><rect x="316.55" y="4.5" width="1" height="1" fill="#888"/><rect x="323.10" y="3" width="1" height="4" fill="#777"/><rect x="329.65" y="4.5" width="1" height="1" fill="#888"/><text x="336.70" y="8.3" font-size="9.3" fill="#555" text-anchor="middle" font-family="Liberation Sans">4</text><rect x="342.75" y="4.5" width="1" height="1" fill="#888"/><rect x="349.30" y="3" width="1" height="4" fill="#777"/><rect x="355.85" y="4.5" width="1" height="1" fill="#888"/><text x="362.90" y="8.3" font-size="9.3" fill="#555" text-anchor="middle" font-family="Liberation Sans">3</text><rect x="368.95" y="4.5" width="1" height="1" fill="#888"/><rect x="375.50" y="3" width="1" height="4" fill="#777"/><rect x="382.05" y="4.5" width="1" height="1" fill="#888"/><text x="389.10" y="8.3" font-size="9.3" fill="#555" text-anchor="middle" font-family="Liberation Sans">2</text><rect x="395.15" y="4.5" width="1" height="1" fill="#888"/><rect x="401.70" y="3" width="1" height="4" fill="#777"/><rect x="408.25" y="4.5" width="1" height="1" fill="#888"/><text x="415.30" y="8.3" font-size="9.3" fill="#555" text-anchor="middle" font-family="Liberation Sans">1</text><rect x="421.35" y="4.5" width="1" height="1" fill="#888"/><rect x="427.90" y="3" width="1" height="4" fill="#777"/><rect x="434.45" y="4.5" width="1" height="1" fill="#888"/><text x="441.50" y="8.3" font-size="9.3" fill="#555" text-anchor="middle" font-family="Liberation Sans">0</text><rect x="447.55" y="4.5" width="1" height="1" fill="#888"/><rect x="454.10" y="3" width="1" height="4" fill="#777"/><rect x="460.65" y="4.5" width="1" height="1" fill="#888"/><text x="467.70" y="8.3" font-size="9.3" fill="#555" text-anchor="middle" font-family="Liberation Sans">1</text><rect x="473.75" y="4.5" width="1" height="1" fill="#888"/><rect x="480.30" y="3" width="1" height="4" fill="#777"/><rect x="486.85" y="4.5" width="1" height="1" fill="#888"/><text x="493.90" y="8.3" font-size="9.3" fill="#555" text-anchor="middle" font-family="Liberation Sans">2</text><rect x="499.95" y="4.5" width="1" height="1" fill="#888"/><rect x="506.50" y="3" width="1" height="4" fill="#777"/><rect x="513.05" y="4.5" width="1" height="1" fill="#888"/><text x="520.10" y="8.3" font-size="9.3" fill="#555" text-anchor="middle" font-family="Liberation Sans">3</text><rect x="526.15" y="4.5" width="1" height="1" fill="#888"/><rect x="532.70" y="3" width="1" height="4" fill="#777"/><rect x="539.25" y="4.5" width="1" height="1" fill="#888"/><text x="546.30" y="8.3" font-size="9.3" fill="#555" text-anchor="middle" font-family="Liberation Sans">4</text><rect x="552.35" y="4.5" width="1" height="1" fill="#888"/><rect x="558.90" y="3" width="1" height="4" fill="#777"/><rect x="565.45" y="4.5" width="1" height="1" fill="#888"/><text x="572.50" y="8.3" font-size="9.3" fill="#555" text-anchor="middle" font-family="Liberation Sans">5</text><rect x="578.55" y="4.5" width="1" height="1" fill="#888"/><rect x="585.10" y="3" width="1" height="4" fill="#777"/><rect x="591.65" y="4.5" width="1" height="1" fill="#888"/><text x="598.70" y="8.3" font-size="9.3" fill="#555" text-anchor="middle" font-family="Liberation Sans">6</text><rect x="604.75" y="4.5" width="1" height="1" fill="#888"/><rect x="611.30" y="3" width="1" height="4" fill="#777"/><rect x="617.85" y="4.5" width="1" height="1" fill="#888"/><text x="624.90" y="8.3" font-size="9.3" fill="#555" text-anchor="middle" font-family="Liberation Sans">7</text><rect x="630.95" y="4.5" width="1" height="1" fill="#888"/><rect x="637.50" y="3" width="1" height="4" fill="#777"/><rect x="644.05" y="4.5" width="1" height="1" fill="#888"/><text x="651.10" y="8.3" font-size="9.3" fill="#555" text-anchor="middle" font-family="Liberation Sans">8</text><rect x="657.15" y="4.5" width="1" height="1" fill="#888"/><rect x="663.70" y="3" width="1" height="4" fill="#777"/><rect x="670.25" y="4.5" width="1" height="1" fill="#888"/><text x="677.30" y="8.3" font-size="9.3" fill="#555" text-anchor="middle" font-family="Liberation Sans">9</text><rect x="683.35" y="4.5" width="1" height="1" fill="#888"/><rect x="689.90" y="3" width="1" height="4" fill="#777"/><rect x="696.45" y="4.5" width="1" height="1" fill="#888"/><text x="703.50" y="8.3" font-size="9.3" fill="#555" text-anchor="middle" font-family="Liberation Sans">10</text><rect x="709.55" y="4.5" width="1" height="1" fill="#888"/><rect x="716.10" y="3" width="1" height="4" fill="#777"/><rect x="722.65" y="4.5" width="1" height="1" fill="#888"/><text x="729.70" y="8.3" font-size="9.3" fill="#555" text-anchor="middle" font-family="Liberation Sans">11</text><rect x="735.75" y="4.5" width="1" height="1" fill="#888"/><rect x="742.30" y="3" width="1" height="4" fill="#777"/><rect x="748.85" y="4.5" width="1" height="1" fill="#888"/><text x="755.90" y="8.3" font-size="9.3" fill="#555" text-anchor="middle" font-family="Liberation Sans">12</text><rect x="761.95" y="4.5" width="1" height="1" fill="#888"/><rect x="768.50" y="3" width="1" height="4" fill="#777"/><rect x="775.05" y="4.5" width="1" height="1" fill="#888"/><text x="782.10" y="8.3" font-size="9.3" fill="#555" text-anchor="middle" font-family="Liberation Sans">13</text><rect x="788.15" y="4.5" width="1" height="1" fill="#888"/><rect x="794.70" y="3" width="1" height="4" fill="#777"/><rect x="801.25" y="4.5" width="1" height="1" fill="#888"/><text x="808.30" y="8.3" font-size="9.3" fill="#555" text-anchor="middle" font-family="Liberation Sans">14</text><rect x="814.35" y="4.5" width="1" height="1" fill="#888"/><rect x="820.90" y="3" width="1" height="4" fill="#777"/><rect x="827.45" y="4.5" width="1" height="1" fill="#888"/><text x="834.50" y="8.3" font-size="9.3" fill="#555" text-anchor="middle" font-family="Liberation Sans">15</text><rect x="840.55" y="4.5" width="1" height="1" fill="#888"/><rect x="847.10" y="3" width="1" height="4" fill="#777"/><rect x="853.65" y="4.5" width="1" height="1" fill="#888"/><text x="860.70" y="8.3" font-size="9.3" fill="#555" text-anchor="middle" font-family="Liberation Sans">16</text><rect x="866.75" y="4.5" width="1" height="1" fill="#888"/><rect x="873.30" y="3" width="1" height="4" fill="#777"/><rect x="879.85" y="4.5" width="1" height="1" fill="#888"/></svg>
<svg class="a" style="left:1111px;top:125px;" width="1" height="10" viewBox="0 0 1 10"><path d="M0.5 0V10" stroke="#E0402A" stroke-width="1" stroke-dasharray="1 1"/></svg>
<div class="a" style="left:191px;top:150px;width:10px;height:497px;background:#fff"></div>
<svg class="a" style="left:191px;top:150px;" width="10" height="497" viewBox="0 0 10 497"><rect x="4.5" y="6.97" width="1" height="1" fill="#888"/><text x="0" y="0" font-size="9.3" fill="#555" text-anchor="middle" font-family="Liberation Sans" transform="translate(8.3 14.00) rotate(-90)">9</text><rect x="4.5" y="20.02" width="1" height="1" fill="#888"/><rect x="3" y="26.55" width="4" height="1" fill="#777"/><rect x="4.5" y="33.07" width="1" height="1" fill="#888"/><text x="0" y="0" font-size="9.3" fill="#555" text-anchor="middle" font-family="Liberation Sans" transform="translate(8.3 40.10) rotate(-90)">8</text><rect x="4.5" y="46.12" width="1" height="1" fill="#888"/><rect x="3" y="52.65" width="4" height="1" fill="#777"/><rect x="4.5" y="59.17" width="1" height="1" fill="#888"/><text x="0" y="0" font-size="9.3" fill="#555" text-anchor="middle" font-family="Liberation Sans" transform="translate(8.3 66.20) rotate(-90)">7</text><rect x="4.5" y="72.22" width="1" height="1" fill="#888"/><rect x="3" y="78.75" width="4" height="1" fill="#777"/><rect x="4.5" y="85.27" width="1" height="1" fill="#888"/><text x="0" y="0" font-size="9.3" fill="#555" text-anchor="middle" font-family="Liberation Sans" transform="translate(8.3 92.30) rotate(-90)">6</text><rect x="4.5" y="98.32" width="1" height="1" fill="#888"/><rect x="3" y="104.85" width="4" height="1" fill="#777"/><rect x="4.5" y="111.37" width="1" height="1" fill="#888"/><text x="0" y="0" font-size="9.3" fill="#555" text-anchor="middle" font-family="Liberation Sans" transform="translate(8.3 118.40) rotate(-90)">5</text><rect x="4.5" y="124.42" width="1" height="1" fill="#888"/><rect x="3" y="130.95" width="4" height="1" fill="#777"/><rect x="4.5" y="137.47" width="1" height="1" fill="#888"/><text x="0" y="0" font-size="9.3" fill="#555" text-anchor="middle" font-family="Liberation Sans" transform="translate(8.3 144.50) rotate(-90)">4</text><rect x="4.5" y="150.52" width="1" height="1" fill="#888"/><rect x="3" y="157.05" width="4" height="1" fill="#777"/><rect x="4.5" y="163.57" width="1" height="1" fill="#888"/><text x="0" y="0" font-size="9.3" fill="#555" text-anchor="middle" font-family="Liberation Sans" transform="translate(8.3 170.60) rotate(-90)">3</text><rect x="4.5" y="176.62" width="1" height="1" fill="#888"/><rect x="3" y="183.15" width="4" height="1" fill="#777"/><rect x="4.5" y="189.67" width="1" height="1" fill="#888"/><text x="0" y="0" font-size="9.3" fill="#555" text-anchor="middle" font-family="Liberation Sans" transform="translate(8.3 196.70) rotate(-90)">2</text><rect x="4.5" y="202.72" width="1" height="1" fill="#888"/><rect x="3" y="209.25" width="4" height="1" fill="#777"/><rect x="4.5" y="215.77" width="1" height="1" fill="#888"/><text x="0" y="0" font-size="9.3" fill="#555" text-anchor="middle" font-family="Liberation Sans" transform="translate(8.3 222.80) rotate(-90)">1</text><rect x="4.5" y="228.82" width="1" height="1" fill="#888"/><rect x="3" y="235.35" width="4" height="1" fill="#777"/><rect x="4.5" y="241.88" width="1" height="1" fill="#888"/><text x="0" y="0" font-size="9.3" fill="#555" text-anchor="middle" font-family="Liberation Sans" transform="translate(8.3 248.90) rotate(-90)">0</text><rect x="4.5" y="254.92" width="1" height="1" fill="#888"/><rect x="3" y="261.45" width="4" height="1" fill="#777"/><rect x="4.5" y="267.97" width="1" height="1" fill="#888"/><text x="0" y="0" font-size="9.3" fill="#555" text-anchor="middle" font-family="Liberation Sans" transform="translate(8.3 275.00) rotate(-90)">1</text><rect x="4.5" y="281.02" width="1" height="1" fill="#888"/><rect x="3" y="287.55" width="4" height="1" fill="#777"/><rect x="4.5" y="294.07" width="1" height="1" fill="#888"/><text x="0" y="0" font-size="9.3" fill="#555" text-anchor="middle" font-family="Liberation Sans" transform="translate(8.3 301.10) rotate(-90)">2</text><rect x="4.5" y="307.12" width="1" height="1" fill="#888"/><rect x="3" y="313.65" width="4" height="1" fill="#777"/><rect x="4.5" y="320.17" width="1" height="1" fill="#888"/><text x="0" y="0" font-size="9.3" fill="#555" text-anchor="middle" font-family="Liberation Sans" transform="translate(8.3 327.20) rotate(-90)">3</text><rect x="4.5" y="333.22" width="1" height="1" fill="#888"/><rect x="3" y="339.75" width="4" height="1" fill="#777"/><rect x="4.5" y="346.27" width="1" height="1" fill="#888"/><text x="0" y="0" font-size="9.3" fill="#555" text-anchor="middle" font-family="Liberation Sans" transform="translate(8.3 353.30) rotate(-90)">4</text><rect x="4.5" y="359.32" width="1" height="1" fill="#888"/><rect x="3" y="365.85" width="4" height="1" fill="#777"/><rect x="4.5" y="372.37" width="1" height="1" fill="#888"/><text x="0" y="0" font-size="9.3" fill="#555" text-anchor="middle" font-family="Liberation Sans" transform="translate(8.3 379.40) rotate(-90)">5</text><rect x="4.5" y="385.42" width="1" height="1" fill="#888"/><rect x="3" y="391.95" width="4" height="1" fill="#777"/><rect x="4.5" y="398.47" width="1" height="1" fill="#888"/><text x="0" y="0" font-size="9.3" fill="#555" text-anchor="middle" font-family="Liberation Sans" transform="translate(8.3 405.50) rotate(-90)">6</text><rect x="4.5" y="411.52" width="1" height="1" fill="#888"/><rect x="3" y="418.05" width="4" height="1" fill="#777"/><rect x="4.5" y="424.57" width="1" height="1" fill="#888"/><text x="0" y="0" font-size="9.3" fill="#555" text-anchor="middle" font-family="Liberation Sans" transform="translate(8.3 431.60) rotate(-90)">7</text><rect x="4.5" y="437.62" width="1" height="1" fill="#888"/><rect x="3" y="444.15" width="4" height="1" fill="#777"/><rect x="4.5" y="450.68" width="1" height="1" fill="#888"/><text x="0" y="0" font-size="9.3" fill="#555" text-anchor="middle" font-family="Liberation Sans" transform="translate(8.3 457.70) rotate(-90)">8</text><rect x="4.5" y="463.72" width="1" height="1" fill="#888"/><rect x="3" y="470.25" width="4" height="1" fill="#777"/><rect x="4.5" y="476.77" width="1" height="1" fill="#888"/><text x="0" y="0" font-size="9.3" fill="#555" text-anchor="middle" font-family="Liberation Sans" transform="translate(8.3 483.80) rotate(-90)">9</text><rect x="4.5" y="489.82" width="1" height="1" fill="#888"/></svg>
<svg class="a" style="left:191px;top:421px;" width="10" height="1" viewBox="0 0 10 1"><path d="M0 0.5H10" stroke="#E0402A" stroke-width="1" stroke-dasharray="1 1"/></svg>
<div class="a" style="left:1168px;top:123px;width:11px;height:493px;background:#DADADA"></div>
<div class="a" style="left:1168px;top:123px;width:11px;height:11.5px;background:#fff"></div>
<svg class="a" style="left:1170.5px;top:126.5px;" width="6" height="4" viewBox="0 0 6 4"><path d="M0 3.5L3 0.5L6 3.5Z" fill="#666"/></svg>
<div class="a" style="left:1168px;top:135px;width:11px;height:30px;background:#fff;border-top:1px solid #D6D6D6"></div>
<div class="a" style="left:1168px;top:604.5px;width:11px;height:11px;background:#fff"></div>
<svg class="a" style="left:1170.5px;top:608px;" width="6" height="4" viewBox="0 0 6 4"><path d="M0 0.5L3 3.5L6 0.5Z" fill="#666"/></svg>
<svg class="a" style="left:1170px;top:619px;" width="7" height="8" viewBox="0 0 7 8"><path d="M0.5 3.5L3.5 0.5L6.5 3.5Z" fill="#777"/><path d="M0.5 7.5L3.5 4.5L6.5 7.5Z" fill="#777"/><rect x="0" y="7.5" width="7" height="1" fill="#777"/></svg>
<svg class="a" style="left:1170px;top:632px;" width="7" height="8" viewBox="0 0 7 8"><path d="M0.5 1L3.5 4L6.5 1Z" fill="#777"/><path d="M0.5 5L3.5 8L6.5 5Z" fill="#777"/><rect x="0" y="0" width="7" height="1" fill="#777"/></svg>
<div class="a" style="left:186px;top:658px;width:994px;height:1px;background:#D8D8D8"></div>
<div class="a t " style="left:195px;top:664.00px;font-size:11.2px;line-height:14.0px;color:#555;">单击此处添加备注</div>
<div class="a" style="left:245px;top:149px;width:885px;height:498px;background:#fff;box-shadow:0 1px 0 0 #D2D2D2"></div>
<div class="a" style="left:246px;top:150px;width:884px;height:497px;overflow:hidden"><div class="a" style="left:0px;top:0px;width:884px;height:172px;overflow:hidden;background:radial-gradient(ellipse 45% 45% at 42% 108%,rgba(58,235,250,0.9) 0%,rgba(58,235,250,0) 100%),radial-gradient(ellipse 60% 80% at 45% 118%,rgba(55,228,250,0.95) 0%,rgba(45,205,250,0.6) 45%,rgba(40,180,250,0) 100%),linear-gradient(180deg,#0820F2 0%,#0A2CF3 22%,#0E48F2 42%,#1468F3 62%,#1C88F5 82%,#2398F5 100%)">
<div class="a" style="left:-40px;top:35px;width:82px;height:48px;border-radius:50%;background:linear-gradient(160deg,rgba(0,20,220,0.55),rgba(20,80,240,0.15))"></div>
<div class="a" style="left:-230px;top:128px;width:520px;height:170px;border-radius:50%;background:rgba(90,190,255,0.22)"></div>
<div class="a" style="left:850px;top:-70px;width:200px;height:110px;border-radius:50%;border:1px solid rgba(150,200,255,0.5);background:rgba(40,110,250,0.25)"></div>
<div class="a" style="left:207px;top:120px;width:11px;height:52px;background:rgba(40,128,240,0.6)"></div>
<div class="a" style="left:220px;top:107px;width:17px;height:65px;background:rgba(40,128,240,0.6)"></div>
<div class="a" style="left:237px;top:117px;width:19px;height:55px;background:rgba(40,128,240,0.6)"></div>
<div class="a" style="left:256px;top:118px;width:15px;height:54px;background:rgba(40,128,240,0.6)"></div>
<div class="a" style="left:269px;top:90px;width:15px;height:82px;background:rgba(40,128,240,0.6)"></div>
<div class="a" style="left:280px;top:109px;width:15px;height:63px;background:rgba(40,128,240,0.6)"></div>
<div class="a" style="left:339px;top:113px;width:18px;height:59px;background:rgba(40,128,240,0.6)"></div>
<div class="a" style="left:361px;top:87px;width:19px;height:85px;background:rgba(40,128,240,0.6)"></div>
<div class="a" style="left:380px;top:79px;width:28px;height:93px;background:rgba(40,128,240,0.6)"></div>
<div class="a" style="left:410px;top:100px;width:20px;height:72px;background:rgba(40,128,240,0.6)"></div>
<div class="a" style="left:432px;top:95px;width:22px;height:77px;background:rgba(40,128,240,0.6)"></div>
<div class="a" style="left:456px;top:110px;width:30px;height:62px;background:rgba(40,128,240,0.6)"></div>
<div class="a" style="left:490px;top:120px;width:40px;height:52px;background:rgba(40,128,240,0.6)"></div>
<div class="a" style="left:577px;top:105px;width:17px;height:67px;background:rgba(40,128,240,0.6)"></div>
<div class="a" style="left:597px;top:105px;width:17px;height:67px;background:rgba(40,128,240,0.6)"></div>
<div class="a" style="left:617px;top:109px;width:15px;height:63px;background:rgba(40,128,240,0.6)"></div>
<div class="a" style="left:634px;top:100px;width:17px;height:72px;background:rgba(40,128,240,0.6)"></div>
<div class="a" style="left:656px;top:105px;width:15px;height:67px;background:rgba(40,128,240,0.6)"></div>
<div class="a" style="left:690px;top:115px;width:21px;height:57px;background:rgba(40,128,240,0.6)"></div>
<div class="a" style="left:318px;top:53px;width:15px;height:119px;border-radius:8px 8px 0 0;background:rgba(40,128,240,0.6)"></div>
<div class="a" style="left:536px;top:54px;width:24px;height:118px;border-radius:12px 12px 0 0;background:rgba(40,128,240,0.6)"></div>
<div class="a" style="left:670px;top:88px;width:18px;height:84px;border-radius:9px 9px 0 0;background:rgba(40,128,240,0.6)"></div>
<div class="a" style="left:225px;top:94px;width:2px;height:14px;background:rgba(40,128,240,0.6)"></div>
<div class="a" style="left:545px;top:139px;width:110px;height:30px;border-radius:50% 50% 0 0;background:rgba(30,100,240,0.35)"></div>
<div class="a" style="left:205px;top:147px;width:70px;height:12px;border-radius:40% 40% 0 0;background:rgba(30,100,240,0.30)"></div>
<div class="a" style="left:139px;top:155px;width:632px;height:4px;border-radius:50%;background:rgba(20,90,235,0.28)"></div>
<div class="a" style="left:560px;top:108px;width:700px;height:200px;border-radius:50%;border-top:1px solid rgba(190,235,255,0.45);background:repeating-linear-gradient(160deg,rgba(170,225,255,0.14) 0 1px,rgba(170,225,255,0.04) 1px 3px)"></div>
<div class="a" style="left:309px;top:17px;width:3.0px;height:3.0px;border-radius:50%;background:rgba(255,255,255,0.85)"></div>
<div class="a" style="left:334px;top:38.5px;width:2.6px;height:2.6px;border-radius:50%;background:rgba(255,255,255,0.85)"></div>
<div class="a" style="left:267px;top:46px;width:2.4px;height:2.4px;border-radius:50%;background:rgba(255,255,255,0.85)"></div>
<div class="a" style="left:240px;top:34px;width:2px;height:2px;border-radius:50%;background:rgba(255,255,255,0.85)"></div>
<div class="a" style="left:205px;top:64px;width:2.4px;height:2.4px;border-radius:50%;background:rgba(255,255,255,0.85)"></div>
<div class="a" style="left:162px;top:105px;width:3.2px;height:3.2px;border-radius:50%;background:rgba(255,255,255,0.85)"></div>
<div class="a" style="left:293.6px;top:65px;width:2.4px;height:2.4px;border-radius:50%;background:rgba(255,255,255,0.85)"></div>
<div class="a" style="left:696px;top:40px;width:3.6px;height:3.6px;border-radius:50%;background:rgba(255,255,255,0.85)"></div>
<div class="a" style="left:606px;top:58px;width:3.2px;height:3.2px;border-radius:50%;background:rgba(255,255,255,0.85)"></div>
<div class="a" style="left:728px;top:119px;width:3.6px;height:3.6px;border-radius:50%;background:rgba(255,255,255,0.85)"></div>
<div class="a" style="left:635px;top:15px;width:2px;height:2px;border-radius:50%;background:rgba(255,255,255,0.85)"></div>
<div class="a" style="left:618px;top:13px;width:2px;height:2px;border-radius:50%;background:rgba(255,255,255,0.85)"></div>
<div class="a" style="left:772px;top:133px;width:2px;height:2px;border-radius:50%;background:rgba(255,255,255,0.85)"></div>
<div class="a" style="left:714px;top:52px;width:2px;height:2px;border-radius:50%;background:rgba(255,255,255,0.85)"></div>
</div>
<svg class="a" style="left:391px;top:31px;" width="37" height="27" viewBox="0 0 37 27"><path d="M18.5 2L35 13.5L18.5 25L2 13.5Z" fill="#4F7BF6" stroke="#fff" stroke-width="3.2" stroke-linejoin="round"/></svg>
<div class="a t" style="left:433.20px;top:34.26px;line-height:14.7px;color:#fff;font-family:'Liberation Sans';font-size:14.7px;font-weight:bold;;transform:scaleX(1.5681);transform-origin:0 0;">AFGS</div>
<div class="a t" style="left:433.50px;top:49.61px;line-height:4px;color:#fff;font-family:'Liberation Sans';font-size:4px;font-weight:bold;;transform:scaleX(1.8695);transform-origin:0 0;">SHENZHEN&nbsp;&nbsp;&nbsp;2023</div>
<div class="a t" style="left:65.00px;top:64.71px;line-height:24.2px;color:#fff;font-family:'Liberation Sans';font-size:24.2px;font-weight:bold;;transform:scaleX(1.4368);transform-origin:0 0;">The 14th Asia Forum on Graphic and Science</div>
<div class="a t" style="left:357.60px;top:93.92px;line-height:21px;color:#fff;font-family:'Liberation Sans';font-size:21px;font-weight:bold;;transform:scaleX(1.3934);transform-origin:0 0;">(AFGS 2023)</div>
<div class="a t" style="left:303.70px;top:125.30px;line-height:12.4px;color:#fff;font-family:'Liberation Sans';font-size:12.4px;font-weight:bold;;transform:scaleX(1.2019);transform-origin:0 0;">Shenzhen, China&nbsp;&nbsp;&nbsp;&nbsp;7-10&nbsp;&nbsp;August, 2023</div>
<div class="a t" style="left:290.60px;top:183.65px;line-height:29px;color:#0070C0;font-family:'Liberation Sans';font-size:29px;font-weight:normal;-webkit-text-stroke:1.1px #0070C0;letter-spacing:0.5px;transform:scaleX(0.8367);transform-origin:0 0;">DESCRIPTIVE GEMOETRY AND</div>
<div class="a t" style="left:217.80px;top:231.83px;line-height:28.2px;color:#0070C0;font-family:'Liberation Sans';font-size:28.2px;font-weight:normal;-webkit-text-stroke:1.1px #0070C0;letter-spacing:0.5px;transform:scaleX(0.8844);transform-origin:0 0;">ITS COMPUTERIRZATION : A CASE STUDY</div>
<div class="a t" style="left:289.60px;top:292.46px;line-height:13.3px;color:#0070C0;font-family:'Liberation Serif';font-size:13.3px;font-weight:normal;;transform:scaleX(1.0353);transform-origin:0 0;">Haiyan YU<sup>1</sup> , <span style="background:repeating-linear-gradient(90deg,rgba(232,70,70,0.9) 0 1px,rgba(232,70,70,0.35) 1px 2px) 0 100%/100% 1px no-repeat;display:inline-block;line-height:1;padding-bottom:0.5px">Hongbo</span> Shan<sup>1</sup>,&nbsp;&nbsp;&nbsp;&nbsp;<span style="background:repeating-linear-gradient(90deg,rgba(232,70,70,0.9) 0 1px,rgba(232,70,70,0.35) 1px 2px) 0 100%/100% 1px no-repeat;display:inline-block;line-height:1;padding-bottom:0.5px">Hongming</span> CAI<sup>2</sup> and <span style="background:repeating-linear-gradient(90deg,rgba(232,70,70,0.9) 0 1px,rgba(232,70,70,0.35) 1px 2px) 0 100%/100% 1px no-repeat;display:inline-block;line-height:1;padding-bottom:0.5px">Yuanjun</span> HE <sup>2</sup></div>
<div class="a t" style="left:278.70px;top:313.16px;line-height:13.3px;color:#0070C0;font-family:'Liberation Serif';font-size:13.3px;font-weight:normal;;transform:scaleX(1.0341);transform-origin:0 0;"><sup>1</sup>Donghua University, China&nbsp;&nbsp;&nbsp;&nbsp;&nbsp;&nbsp;&nbsp;<sup>2</sup> Shanghai <span style="background:repeating-linear-gradient(90deg,rgba(232,70,70,0.9) 0 1px,rgba(232,70,70,0.35) 1px 2px) 0 100%/100% 1px no-repeat;display:inline-block;line-height:1;padding-bottom:0.5px">Jiaotong</span> University, China</div>
<div class="a t" style="left:429.80px;top:406.94px;line-height:15px;color:#000;font-family:'Liberation Serif';font-size:15px;font-weight:bold;;transform:scaleX(1.0217);transform-origin:0 0;">Haiyan YU</div>
<div class="a t" style="left:352.90px;top:425.61px;line-height:13.6px;color:#000;font-family:'Liberation Serif';font-size:13.6px;font-weight:bold;;transform:scaleX(1.0154);transform-origin:0 0;"><span style="background:repeating-linear-gradient(90deg,rgba(232,70,70,0.9) 0 1px,rgba(232,70,70,0.35) 1px 2px) 0 100%/100% 1px no-repeat;display:inline-block;line-height:1;padding-bottom:0.5px">Donghua</span> University,&nbsp; Shanghai, China</div>
<div class="a t" style="left:414.30px;top:441.61px;line-height:13.6px;color:#000;font-family:'Liberation Serif';font-size:13.6px;font-weight:bold;;transform:scaleX(1.0152);transform-origin:0 0;">yuhy@dhu.edu.cn</div></div>
<div class="a" style="left:26px;top:134.7px;width:131px;height:75.3px;border:2px solid #C94A2C;background:#fff"></div>
<div class="a t" style="left:10.00px;top:133.50px;line-height:13px;color:#C43E1C;font-family:'Liberation Sans';font-size:13px;font-weight:normal;;">1</div>
<div class="a" style="left:29px;top:137px;width:884px;height:497px;overflow:hidden;transform:scale(0.14208);transform-origin:0 0;background:#fff"><div class="a" style="left:0px;top:0px;width:884px;height:172px;overflow:hidden;background:radial-gradient(ellipse 45% 45% at 42% 108%,rgba(58,235,250,0.9) 0%,rgba(58,235,250,0) 100%),radial-gradient(ellipse 60% 80% at 45% 118%,rgba(55,228,250,0.95) 0%,rgba(45,205,250,0.6) 45%,rgba(40,180,250,0) 100%),linear-gradient(180deg,#0820F2 0%,#0A2CF3 22%,#0E48F2 42%,#1468F3 62%,#1C88F5 82%,#2398F5 100%)">
<div class="a" style="left:-40px;top:35px;width:82px;height:48px;border-radius:50%;background:linear-gradient(160deg,rgba(0,20,220,0.55),rgba(20,80,240,0.15))"></div>
<div class="a" style="left:-230px;top:128px;width:520px;height:170px;border-radius:50%;background:rgba(90,190,255,0.22)"></div>
<div class="a" style="left:850px;top:-70px;width:200px;height:110px;border-radius:50%;border:1px solid rgba(150,200,255,0.5);background:rgba(40,110,250,0.25)"></div>
<div class="a" style="left:207px;top:120px;width:11px;height:52px;background:rgba(40,128,240,0.6)"></div>
<div class="a" style="left:220px;top:107px;width:17px;height:65px;background:rgba(40,128,240,0.6)"></div>
<div class="a" style="left:237px;top:117px;width:19px;height:55px;background:rgba(40,128,240,0.6)"></div>
<div class="a" style="left:256px;top:118px;width:15px;height:54px;background:rgba(40,128,240,0.6)"></div>
<div class="a" style="left:269px;top:90px;width:15px;height:82px;background:rgba(40,128,240,0.6)"></div>
<div class="a" style="left:280px;top:109px;width:15px;height:63px;background:rgba(40,128,240,0.6)"></div>
<div class="a" style="left:339px;top:113px;width:18px;height:59px;background:rgba(40,128,240,0.6)"></div>
<div class="a" style="left:361px;top:87px;width:19px;height:85px;background:rgba(40,128,240,0.6)"></div>
<div class="a" style="left:380px;top:79px;width:28px;height:93px;background:rgba(40,128,240,0.6)"></div>
<div class="a" style="left:410px;top:100px;width:20px;height:72px;background:rgba(40,128,240,0.6)"></div>
<div class="a" style="left:432px;top:95px;width:22px;height:77px;background:rgba(40,128,240,0.6)"></div>
<div class="a" style="left:456px;top:110px;width:30px;height:62px;background:rgba(40,128,240,0.6)"></div>
<div class="a" style="left:490px;top:120px;width:40px;height:52px;background:rgba(40,128,240,0.6)"></div>
<div class="a" style="left:577px;top:105px;width:17px;height:67px;background:rgba(40,128,240,0.6)"></div>
<div class="a" style="left:597px;top:105px;width:17px;height:67px;background:rgba(40,128,240,0.6)"></div>
<div class="a" style="left:617px;top:109px;width:15px;height:63px;background:rgba(40,128,240,0.6)"></div>
<div class="a" style="left:634px;top:100px;width:17px;height:72px;background:rgba(40,128,240,0.6)"></div>
<div class="a" style="left:656px;top:105px;width:15px;height:67px;background:rgba(40,128,240,0.6)"></div>
<div class="a" style="left:690px;top:115px;width:21px;height:57px;background:rgba(40,128,240,0.6)"></div>
<div class="a" style="left:318px;top:53px;width:15px;height:119px;border-radius:8px 8px 0 0;background:rgba(40,128,240,0.6)"></div>
<div class="a" style="left:536px;top:54px;width:24px;height:118px;border-radius:12px 12px 0 0;background:rgba(40,128,240,0.6)"></div>
<div class="a" style="left:670px;top:88px;width:18px;height:84px;border-radius:9px 9px 0 0;background:rgba(40,128,240,0.6)"></div>
<div class="a" style="left:225px;top:94px;width:2px;height:14px;background:rgba(40,128,240,0.6)"></div>
<div class="a" style="left:545px;top:139px;width:110px;height:30px;border-radius:50% 50% 0 0;background:rgba(30,100,240,0.35)"></div>
<div class="a" style="left:205px;top:147px;width:70px;height:12px;border-radius:40% 40% 0 0;background:rgba(30,100,240,0.30)"></div>
<div class="a" style="left:139px;top:155px;width:632px;height:4px;border-radius:50%;background:rgba(20,90,235,0.28)"></div>
<div class="a" style="left:560px;top:108px;width:700px;height:200px;border-radius:50%;border-top:1px solid rgba(190,235,255,0.45);background:repeating-linear-gradient(160deg,rgba(170,225,255,0.14) 0 1px,rgba(170,225,255,0.04) 1px 3px)"></div>
<div class="a" style="left:309px;top:17px;width:3.0px;height:3.0px;border-radius:50%;background:rgba(255,255,255,0.85)"></div>
<div class="a" style="left:334px;top:38.5px;width:2.6px;height:2.6px;border-radius:50%;background:rgba(255,255,255,0.85)"></div>
<div class="a" style="left:267px;top:46px;width:2.4px;height:2.4px;border-radius:50%;background:rgba(255,255,255,0.85)"></div>
<div class="a" style="left:240px;top:34px;width:2px;height:2px;border-radius:50%;background:rgba(255,255,255,0.85)"></div>
<div class="a" style="left:205px;top:64px;width:2.4px;height:2.4px;border-radius:50%;background:rgba(255,255,255,0.85)"></div>
<div class="a" style="left:162px;top:105px;width:3.2px;height:3.2px;border-radius:50%;background:rgba(255,255,255,0.85)"></div>
<div class="a" style="left:293.6px;top:65px;width:2.4px;height:2.4px;border-radius:50%;background:rgba(255,255,255,0.85)"></div>
<div class="a" style="left:696px;top:40px;width:3.6px;height:3.6px;border-radius:50%;background:rgba(255,255,255,0.85)"></div>
<div class="a" style="left:606px;top:58px;width:3.2px;height:3.2px;border-radius:50%;background:rgba(255,255,255,0.85)"></div>
<div class="a" style="left:728px;top:119px;width:3.6px;height:3.6px;border-radius:50%;background:rgba(255,255,255,0.85)"></div>
<div class="a" style="left:635px;top:15px;width:2px;height:2px;border-radius:50%;background:rgba(255,255,255,0.85)"></div>
<div class="a" style="left:618px;top:13px;width:2px;height:2px;border-radius:50%;background:rgba(255,255,255,0.85)"></div>
<div class="a" style="left:772px;top:133px;width:2px;height:2px;border-radius:50%;background:rgba(255,255,255,0.85)"></div>
<div class="a" style="left:714px;top:52px;width:2px;height:2px;border-radius:50%;background:rgba(255,255,255,0.85)"></div>
</div>
<svg class="a" style="left:391px;top:31px;" width="37" height="27" viewBox="0 0 37 27"><path d="M18.5 2L35 13.5L18.5 25L2 13.5Z" fill="#4F7BF6" stroke="#fff" stroke-width="3.2" stroke-linejoin="round"/></svg>
<div class="a t" style="left:433.20px;top:34.26px;line-height:14.7px;color:#fff;font-family:'Liberation Sans';font-size:14.7px;font-weight:bold;;transform:scaleX(1.5681);transform-origin:0 0;">AFGS</div>
<div class="a t" style="left:433.50px;top:49.61px;line-height:4px;color:#fff;font-family:'Liberation Sans';font-size:4px;font-weight:bold;;transform:scaleX(1.8695);transform-origin:0 0;">SHENZHEN&nbsp;&nbsp;&nbsp;2023</div>
<div class="a t" style="left:65.00px;top:64.71px;line-height:24.2px;color:#fff;font-family:'Liberation Sans';font-size:24.2px;font-weight:bold;;transform:scaleX(1.4368);transform-origin:0 0;">The 14th Asia Forum on Graphic and Science</div>
<div class="a t" style="left:357.60px;top:93.92px;line-height:21px;color:#fff;font-family:'Liberation Sans';font-size:21px;font-weight:bold;;transform:scaleX(1.3934);transform-origin:0 0;">(AFGS 2023)</div>
<div class="a t" style="left:303.70px;top:125.30px;line-height:12.4px;color:#fff;font-family:'Liberation Sans';font-size:12.4px;font-weight:bold;;transform:scaleX(1.2019);transform-origin:0 0;">Shenzhen, China&nbsp;&nbsp;&nbsp;&nbsp;7-10&nbsp;&nbsp;August, 2023</div>
<div class="a t" style="left:290.60px;top:183.65px;line-height:29px;color:#0070C0;font-family:'Liberation Sans';font-size:29px;font-weight:normal;-webkit-text-stroke:2.4px #0070C0;letter-spacing:0.5px;transform:scaleX(0.8367);transform-origin:0 0;">DESCRIPTIVE GEMOETRY AND</div>
<div class="a t" style="left:217.80px;top:231.83px;line-height:28.2px;color:#0070C0;font-family:'Liberation Sans';font-size:28.2px;font-weight:normal;-webkit-text-stroke:2.4px #0070C0;letter-spacing:0.5px;transform:scaleX(0.8844);transform-origin:0 0;">ITS COMPUTERIRZATION : A CASE STUDY</div>
<div class="a t" style="left:289.60px;top:292.46px;line-height:13.3px;color:#0070C0;font-family:'Liberation Serif';font-size:13.3px;font-weight:normal;-webkit-text-stroke:1px #0070C0;transform:scaleX(1.0353);transform-origin:0 0;">Haiyan YU<sup>1</sup> , <span style="background:repeating-linear-gradient(90deg,rgba(232,70,70,0.9) 0 1px,rgba(232,70,70,0.35) 1px 2px) 0 100%/100% 1px no-repeat;display:inline-block;line-height:1;padding-bottom:0.5px">Hongbo</span> Shan<sup>1</sup>,&nbsp;&nbsp;&nbsp;&nbsp;<span style="background:repeating-linear-gradient(90deg,rgba(232,70,70,0.9) 0 1px,rgba(232,70,70,0.35) 1px 2px) 0 100%/100% 1px no-repeat;display:inline-block;line-height:1;padding-bottom:0.5px">Hongming</span> CAI<sup>2</sup> and <span style="background:repeating-linear-gradient(90deg,rgba(232,70,70,0.9) 0 1px,rgba(232,70,70,0.35) 1px 2px) 0 100%/100% 1px no-repeat;display:inline-block;line-height:1;padding-bottom:0.5px">Yuanjun</span> HE <sup>2</sup></div>
<div class="a t" style="left:278.70px;top:313.16px;line-height:13.3px;color:#0070C0;font-family:'Liberation Serif';font-size:13.3px;font-weight:normal;-webkit-text-stroke:1px #0070C0;transform:scaleX(1.0341);transform-origin:0 0;"><sup>1</sup>Donghua University, China&nbsp;&nbsp;&nbsp;&nbsp;&nbsp;&nbsp;&nbsp;<sup>2</sup> Shanghai <span style="background:repeating-linear-gradient(90deg,rgba(232,70,70,0.9) 0 1px,rgba(232,70,70,0.35) 1px 2px) 0 100%/100% 1px no-repeat;display:inline-block;line-height:1;padding-bottom:0.5px">Jiaotong</span> University, China</div>
<div class="a t" style="left:429.80px;top:406.94px;line-height:15px;color:#000;font-family:'Liberation Serif';font-size:15px;font-weight:bold;;transform:scaleX(1.0217);transform-origin:0 0;">Haiyan YU</div>
<div class="a t" style="left:352.90px;top:425.61px;line-height:13.6px;color:#000;font-family:'Liberation Serif';font-size:13.6px;font-weight:bold;;transform:scaleX(1.0154);transform-origin:0 0;"><span style="background:repeating-linear-gradient(90deg,rgba(232,70,70,0.9) 0 1px,rgba(232,70,70,0.35) 1px 2px) 0 100%/100% 1px no-repeat;display:inline-block;line-height:1;padding-bottom:0.5px">Donghua</span> University,&nbsp; Shanghai, China</div>
<div class="a t" style="left:414.30px;top:441.61px;line-height:13.6px;color:#000;font-family:'Liberation Serif';font-size:13.6px;font-weight:bold;;transform:scaleX(1.0152);transform-origin:0 0;">yuhy@dhu.edu.cn</div></div>
<div class="a" style="left:28.3px;top:223.0px;width:126.5px;height:72px;border:1px solid #CDCDCD;background:#fff"></div>
<div class="a t" style="left:10.00px;top:220.10px;line-height:13px;color:#444;font-family:'Liberation Sans';font-size:13px;font-weight:normal;;">2</div>
<div class="a" style="left:29px;top:223.6px;width:884px;height:497px;overflow:hidden;transform:scale(0.14208);transform-origin:0 0;background:#fff"><div class="a t" style="left:260.00px;top:52.91px;line-height:32px;color:#1F6FC0;font-family:'Liberation Sans';font-size:32px;font-weight:bold;-webkit-text-stroke:1.5px #1F6FC0;transform:scaleX(1.3866);transform-origin:0 0;">Outline for Today</div>
<div class="a" style="left:180px;top:163px;width:12px;height:12px;background:#1F6FC0"></div>
<div class="a t" style="left:228.00px;top:158.38px;line-height:22px;color:#1F6FC0;font-family:'Liberation Sans';font-size:22px;font-weight:bold;-webkit-text-stroke:1.5px #1F6FC0;transform:scaleX(1.4101);transform-origin:0 0;">Background</div>
<div class="a" style="left:180px;top:221px;width:12px;height:12px;background:#1F6FC0"></div>
<div class="a t" style="left:228.00px;top:216.38px;line-height:22px;color:#1F6FC0;font-family:'Liberation Sans';font-size:22px;font-weight:bold;-webkit-text-stroke:1.5px #1F6FC0;transform:scaleX(1.4326);transform-origin:0 0;">DG and graphic recognition</div>
<div class="a" style="left:180px;top:277px;width:12px;height:12px;background:#1F6FC0"></div>
<div class="a t" style="left:228.00px;top:272.38px;line-height:22px;color:#1F6FC0;font-family:'Liberation Sans';font-size:22px;font-weight:bold;-webkit-text-stroke:1.5px #1F6FC0;transform:scaleX(1.4317);transform-origin:0 0;">Computerized DG</div>
<div class="a" style="left:180px;top:338px;width:12px;height:12px;background:#1F6FC0"></div>
<div class="a t" style="left:228.00px;top:333.38px;line-height:22px;color:#1F6FC0;font-family:'Liberation Sans';font-size:22px;font-weight:bold;-webkit-text-stroke:1.5px #1F6FC0;transform:scaleX(1.4082);transform-origin:0 0;">A case study</div>
<div class="a" style="left:180px;top:395px;width:12px;height:12px;background:#1F6FC0"></div>
<div class="a t" style="left:228.00px;top:390.38px;line-height:22px;color:#1F6FC0;font-family:'Liberation Sans';font-size:22px;font-weight:bold;-webkit-text-stroke:1.5px #1F6FC0;transform:scaleX(1.3332);transform-origin:0 0;">Conclusions</div>
<div class="a" style="left:440px;top:474px;width:4px;height:5px;background:#BBB"></div>
<div class="a" style="left:760px;top:474px;width:40px;height:5px;background:#C8C8C8"></div></div>
<div class="a" style="left:28.3px;top:310.5px;width:126.5px;height:72px;border:1px solid #CDCDCD;background:#fff"></div>
<div class="a t" style="left:10.00px;top:307.60px;line-height:13px;color:#444;font-family:'Liberation Sans';font-size:13px;font-weight:normal;;">3</div>
<div class="a" style="left:29px;top:311.1px;width:884px;height:497px;overflow:hidden;transform:scale(0.14208);transform-origin:0 0;background:#fff"><div class="a t" style="left:339.50px;top:34.61px;line-height:30px;color:#1F6FC0;font-family:'Liberation Sans';font-size:30px;font-weight:bold;-webkit-text-stroke:1.5px #1F6FC0;transform:scaleX(1.1941);transform-origin:0 0;">Background</div>
<div class="a" style="left:812px;top:9px;width:60px;height:52px;border-radius:50%;background:radial-gradient(circle,#B07A20 0%,#C89540 35%,#E8C878 65%,#F2DDA0 100%)"></div>
<div class="a" style="left:43px;top:88.5px;width:8px;height:8px;background:#2A62C8;border-radius:50%"></div>
<div class="a t" style="left:55.00px;top:82.57px;line-height:20px;color:#222;font-family:'Liberation Sans';font-size:20px;font-weight:normal;-webkit-text-stroke:0.7px #222;transform:scaleX(1.2220);transform-origin:0 0;">geometry is the branch o</div>
<div class="a t" style="left:61.00px;top:119.07px;line-height:20px;color:#222;font-family:'Liberation Sans';font-size:20px;font-weight:normal;-webkit-text-stroke:0.7px #222;transform:scaleX(1.2606);transform-origin:0 0;">geometry is the branch of geometr</div>
<div class="a t" style="left:61.00px;top:153.07px;line-height:20px;color:#222;font-family:'Liberation Sans';font-size:20px;font-weight:normal;-webkit-text-stroke:0.7px #222;transform:scaleX(1.2711);transform-origin:0 0;">tive geometry is the branch of geometry which allows the representati</div>
<div class="a t" style="left:61.00px;top:187.07px;line-height:20px;color:#222;font-family:'Liberation Sans';font-size:20px;font-weight:normal;-webkit-text-stroke:0.7px #222;transform:scaleX(1.3601);transform-origin:0 0;">iptive geometry is the branch of</div>
<div class="a t" style="left:61.00px;top:222.07px;line-height:20px;color:#222;font-family:'Liberation Sans';font-size:20px;font-weight:normal;-webkit-text-stroke:0.7px #222;transform:scaleX(1.2561);transform-origin:0 0;">the branch of geometry which allows the representation of three dimens</div>
<div class="a t" style="left:80.00px;top:250.07px;line-height:20px;color:#222;font-family:'Liberation Sans';font-size:20px;font-weight:normal;-webkit-text-stroke:0.7px #222;transform:scaleX(1.2845);transform-origin:0 0;">geometry which allows the r</div>
<div class="a t" style="left:61.00px;top:284.07px;line-height:20px;color:#222;font-family:'Liberation Sans';font-size:20px;font-weight:normal;-webkit-text-stroke:0.7px #222;transform:scaleX(1.2465);transform-origin:0 0;">h of geometry which allows the repre</div>
<div class="a" style="left:43px;top:327px;width:8px;height:8px;background:#2A62C8;border-radius:50%"></div>
<div class="a t" style="left:55.00px;top:321.07px;line-height:20px;color:#222;font-family:'Liberation Sans';font-size:20px;font-weight:normal;-webkit-text-stroke:0.7px #222;transform:scaleX(1.2107);transform-origin:0 0;">geometry is the branch of geome</div>
<div class="a t" style="left:59.00px;top:360.07px;line-height:20px;color:#222;font-family:'Liberation Sans';font-size:20px;font-weight:normal;-webkit-text-stroke:0.7px #222;transform:scaleX(1.2787);transform-origin:0 0;">is the branch of geometry which allo</div>
<div class="a t" style="left:59.00px;top:395.07px;line-height:20px;color:#222;font-family:'Liberation Sans';font-size:20px;font-weight:normal;-webkit-text-stroke:0.7px #222;transform:scaleX(1.2717);transform-origin:0 0;">tive geometry is the branch of geometr</div>
<div class="a" style="left:664px;top:268px;width:209px;height:90px;background:#CACACA"></div>
<svg class="a" style="left:664px;top:268px;" width="209" height="90" viewBox="0 0 209 90"><path d="M30 20L70 15V60L30 70Z" fill="none" stroke="#D04040" stroke-width="3"/><path d="M110 40L150 30L180 60L140 75Z" fill="none" stroke="#30A050" stroke-width="3"/><path d="M80 20L200 10" stroke="#5080D0" stroke-width="2"/></svg>
<div class="a" style="left:748px;top:378px;width:117px;height:86px;background:#D0D0C8"></div>
<svg class="a" style="left:748px;top:378px;" width="117" height="86" viewBox="0 0 117 86"><circle cx="55" cy="45" r="32" fill="none" stroke="#D07070" stroke-width="2"/><path d="M70 70L105 30" stroke="#30B030" stroke-width="5"/><rect x="0" y="72" width="117" height="14" fill="#C8C890"/></svg>
<svg class="a" style="left:529px;top:330px;" width="201" height="149" viewBox="0 0 201 149"><path d="M10 30V90M0 80H60L200 50M40 110L170 140M120 60L200 120M60 90L140 149" fill="none" stroke="#4A6AE8" stroke-width="2.5"/><path d="M70 40H100V70H70Z" fill="none" stroke="#333" stroke-width="3"/><path d="M60 90L150 130" stroke="#555" stroke-width="2"/></svg>
<div class="a" style="left:40px;top:476px;width:40px;height:4px;background:#C8C8C8"></div>
<div class="a" style="left:440px;top:476px;width:3px;height:4px;background:#8AB"></div></div>
<div class="a" style="left:28.3px;top:397.7px;width:126.5px;height:72px;border:1px solid #CDCDCD;background:#fff"></div>
<div class="a t" style="left:10.00px;top:394.80px;line-height:13px;color:#444;font-family:'Liberation Sans';font-size:13px;font-weight:normal;;">4</div>
<div class="a" style="left:29px;top:398.3px;width:884px;height:497px;overflow:hidden;transform:scale(0.14208);transform-origin:0 0;background:#fff"><div class="a t" style="left:198.00px;top:31.76px;line-height:31px;color:#1F6FC0;font-family:'Liberation Sans';font-size:31px;font-weight:bold;-webkit-text-stroke:1.5px #1F6FC0;transform:scaleX(1.1612);transform-origin:0 0;">DG and Graphic Recognition</div>
<div class="a" style="left:812px;top:9px;width:60px;height:52px;border-radius:50%;background:radial-gradient(circle,#B07A20 0%,#C89540 35%,#E8C878 65%,#F2DDA0 100%)"></div>
<div class="a" style="left:129px;top:92px;width:650px;height:370px;background:#EFEFEF"></div>
<div class="a" style="left:145px;top:117px;width:195px;height:60px;background:#fff;border-radius:50%;border:2px solid #D8DDF5"></div>
<div class="a" style="left:340px;top:118px;width:295px;height:63px;background:#fff;border:1px solid #E0E0F0"></div>
<div class="a" style="left:643px;top:117px;width:70px;height:72px;background:#fff;border-radius:50%;border:2px solid #D8DDF5"></div>
<div class="a t" style="left:185.00px;top:136.07px;line-height:20px;color:#222;font-family:'Liberation Sans';font-size:20px;font-weight:bold;-webkit-text-stroke:0.6px #222;transform:scaleX(0.7979);transform-origin:0 0;">View transform</div>
<div class="a t" style="left:352.00px;top:129.57px;line-height:20px;color:#222;font-family:'Liberation Sans';font-size:20px;font-weight:bold;-webkit-text-stroke:0.6px #222;transform:scaleX(1.0244);transform-origin:0 0;">Overall plan, seeking the be</div>
<div class="a t" style="left:380.00px;top:150.57px;line-height:20px;color:#222;font-family:'Liberation Sans';font-size:20px;font-weight:bold;-webkit-text-stroke:0.6px #222;transform:scaleX(1.0568);transform-origin:0 0;">st spatial perspective</div>
<div class="a t" style="left:655.00px;top:142.07px;line-height:20px;color:#222;font-family:'Liberation Sans';font-size:20px;font-weight:bold;-webkit-text-stroke:0.6px #222;transform:scaleX(0.7957);transform-origin:0 0;">shape</div>
<div class="a" style="left:145px;top:225px;width:183px;height:69px;background:#fff;border-radius:50%;border:2px solid #D8DDF5"></div>
<div class="a" style="left:332px;top:228px;width:295px;height:64px;background:#fff;border:1px solid #E0E0F0"></div>
<div class="a" style="left:646px;top:221px;width:68px;height:74px;background:#fff;border-radius:50%;border:2px solid #D8DDF5"></div>
<div class="a t" style="left:185.00px;top:248.57px;line-height:20px;color:#222;font-family:'Liberation Sans';font-size:20px;font-weight:bold;-webkit-text-stroke:0.6px #222;transform:scaleX(0.4956);transform-origin:0 0;">Dimensional relations</div>
<div class="a t" style="left:344.00px;top:240.07px;line-height:20px;color:#222;font-family:'Liberation Sans';font-size:20px;font-weight:bold;-webkit-text-stroke:0.6px #222;transform:scaleX(0.9676);transform-origin:0 0;">Conversion to a planar media</div>
<div class="a t" style="left:372.00px;top:261.07px;line-height:20px;color:#222;font-family:'Liberation Sans';font-size:20px;font-weight:bold;-webkit-text-stroke:0.6px #222;transform:scaleX(1.1797);transform-origin:0 0;"> with its projections</div>
<div class="a t" style="left:658.00px;top:247.07px;line-height:20px;color:#222;font-family:'Liberation Sans';font-size:20px;font-weight:bold;-webkit-text-stroke:0.6px #222;transform:scaleX(0.7611);transform-origin:0 0;">image</div>
<div class="a" style="left:150px;top:346px;width:193px;height:68px;background:#fff;border-radius:50%;border:2px solid #D8DDF5"></div>
<div class="a" style="left:344px;top:348px;width:304px;height:66px;background:#fff;border:1px solid #E0E0F0"></div>
<div class="a" style="left:651px;top:342px;width:70px;height:76px;background:#fff;border-radius:50%;border:2px solid #D8DDF5"></div>
<div class="a t" style="left:190.00px;top:369.07px;line-height:20px;color:#222;font-family:'Liberation Sans';font-size:20px;font-weight:bold;-webkit-text-stroke:0.6px #222;transform:scaleX(0.5296);transform-origin:0 0;">Construction relations</div>
<div class="a t" style="left:356.00px;top:361.07px;line-height:20px;color:#222;font-family:'Liberation Sans';font-size:20px;font-weight:bold;-webkit-text-stroke:0.6px #222;transform:scaleX(0.9261);transform-origin:0 0;">Analyse the essence decompos</div>
<div class="a t" style="left:384.00px;top:382.07px;line-height:20px;color:#222;font-family:'Liberation Sans';font-size:20px;font-weight:bold;-webkit-text-stroke:0.6px #222;transform:scaleX(1.0555);transform-origin:0 0;">ing to lines and points</div>
<div class="a t" style="left:663.00px;top:369.07px;line-height:20px;color:#222;font-family:'Liberation Sans';font-size:20px;font-weight:bold;-webkit-text-stroke:0.6px #222;transform:scaleX(1.0348);transform-origin:0 0;">draft</div>
<div class="a" style="left:450px;top:185px;width:10px;height:38px;background:#fff;border:2px solid #A8C0F0"></div>
<div class="a" style="left:540px;top:185px;width:10px;height:38px;background:#fff;border:2px solid #A8C0F0"></div>
<div class="a" style="left:455px;top:298px;width:10px;height:38px;background:#fff;border:2px solid #A8C0F0"></div>
<div class="a" style="left:560px;top:298px;width:10px;height:38px;background:#fff;border:2px solid #A8C0F0"></div>
<div class="a" style="left:40px;top:476px;width:40px;height:4px;background:#C8C8C8"></div>
<div class="a" style="left:440px;top:476px;width:3px;height:4px;background:#8AB"></div></div>
<div class="a" style="left:28.3px;top:484.9px;width:126.5px;height:72px;border:1px solid #CDCDCD;background:#fff"></div>
<div class="a t" style="left:10.00px;top:482.00px;line-height:13px;color:#444;font-family:'Liberation Sans';font-size:13px;font-weight:normal;;">5</div>
<div class="a" style="left:29px;top:485.5px;width:884px;height:497px;overflow:hidden;transform:scale(0.14208);transform-origin:0 0;background:#fff"><div class="a t" style="left:43.00px;top:36.61px;line-height:30px;color:#1F6FC0;font-family:'Liberation Sans';font-size:30px;font-weight:bold;-webkit-text-stroke:1.5px #1F6FC0;transform:scaleX(1.2014);transform-origin:0 0;">Computerized Descriptive Geometry(CDG)</div>
<div class="a" style="left:812px;top:9px;width:60px;height:52px;border-radius:50%;background:radial-gradient(circle,#B07A20 0%,#C89540 35%,#E8C878 65%,#F2DDA0 100%)"></div>
<div class="a" style="left:89px;top:102px;width:545px;height:270px;background:#EEEEEE"></div>
<div class="a" style="left:643px;top:102px;width:140px;height:362px;background:#DCE7F5"></div>
<div class="a" style="left:89px;top:376px;width:553px;height:86px;background:#DCE7F5"></div>
<div class="a t" style="left:93.00px;top:105.46px;line-height:16px;color:#3AA0E0;font-family:'Liberation Sans';font-size:16px;font-weight:bold;;transform:scaleX(1.1400);transform-origin:0 0;">Graphic recognition in DG</div>
<div class="a" style="left:123px;top:145px;width:157px;height:52px;background:#fff;border-radius:50%;border:2px solid #D8DDF5"></div>
<div class="a" style="left:284px;top:143px;width:269px;height:56px;background:#fff;border:1px solid #E0E0F0"></div>
<div class="a" style="left:555px;top:138px;width:66px;height:66px;background:#fff;border-radius:50%;border:2px solid #D8DDF5"></div>
<div class="a t" style="left:160.00px;top:160.92px;line-height:19px;color:#222;font-family:'Liberation Sans';font-size:19px;font-weight:bold;;transform:scaleX(0.6208);transform-origin:0 0;">View transform</div>
<div class="a t" style="left:300.00px;top:153.92px;line-height:19px;color:#222;font-family:'Liberation Sans';font-size:19px;font-weight:bold;;transform:scaleX(0.8575);transform-origin:0 0;">Overall plan, seeking the best</div>
<div class="a t" style="left:330.00px;top:171.92px;line-height:19px;color:#222;font-family:'Liberation Sans';font-size:19px;font-weight:bold;;transform:scaleX(0.8767);transform-origin:0 0;">spatial perspective</div>
<div class="a t" style="left:562.00px;top:160.92px;line-height:19px;color:#222;font-family:'Liberation Sans';font-size:19px;font-weight:bold;;transform:scaleX(0.9104);transform-origin:0 0;">shape</div>
<div class="a" style="left:123px;top:225px;width:157px;height:52px;background:#fff;border-radius:50%;border:2px solid #D8DDF5"></div>
<div class="a" style="left:284px;top:223px;width:269px;height:56px;background:#fff;border:1px solid #E0E0F0"></div>
<div class="a" style="left:555px;top:218px;width:66px;height:66px;background:#fff;border-radius:50%;border:2px solid #D8DDF5"></div>
<div class="a t" style="left:160.00px;top:240.92px;line-height:19px;color:#222;font-family:'Liberation Sans';font-size:19px;font-weight:bold;;transform:scaleX(0.6208);transform-origin:0 0;">View transform</div>
<div class="a t" style="left:300.00px;top:233.92px;line-height:19px;color:#222;font-family:'Liberation Sans';font-size:19px;font-weight:bold;;transform:scaleX(0.8575);transform-origin:0 0;">Overall plan, seeking the best</div>
<div class="a t" style="left:330.00px;top:251.92px;line-height:19px;color:#222;font-family:'Liberation Sans';font-size:19px;font-weight:bold;;transform:scaleX(0.8767);transform-origin:0 0;">spatial perspective</div>
<div class="a t" style="left:562.00px;top:240.92px;line-height:19px;color:#222;font-family:'Liberation Sans';font-size:19px;font-weight:bold;;transform:scaleX(0.9104);transform-origin:0 0;">shape</div>
<div class="a" style="left:123px;top:305px;width:157px;height:52px;background:#fff;border-radius:50%;border:2px solid #D8DDF5"></div>
<div class="a" style="left:284px;top:303px;width:269px;height:56px;background:#fff;border:1px solid #E0E0F0"></div>
<div class="a" style="left:555px;top:298px;width:66px;height:66px;background:#fff;border-radius:50%;border:2px solid #D8DDF5"></div>
<div class="a t" style="left:160.00px;top:320.92px;line-height:19px;color:#222;font-family:'Liberation Sans';font-size:19px;font-weight:bold;;transform:scaleX(0.6208);transform-origin:0 0;">View transform</div>
<div class="a t" style="left:300.00px;top:313.92px;line-height:19px;color:#222;font-family:'Liberation Sans';font-size:19px;font-weight:bold;;transform:scaleX(0.8575);transform-origin:0 0;">Overall plan, seeking the best</div>
<div class="a t" style="left:330.00px;top:331.92px;line-height:19px;color:#222;font-family:'Liberation Sans';font-size:19px;font-weight:bold;;transform:scaleX(0.8767);transform-origin:0 0;">spatial perspective</div>
<div class="a t" style="left:562.00px;top:320.92px;line-height:19px;color:#222;font-family:'Liberation Sans';font-size:19px;font-weight:bold;;transform:scaleX(0.9104);transform-origin:0 0;">shape</div>
<div class="a" style="left:123px;top:390px;width:157px;height:52px;background:#fff;border-radius:50%;border:2px solid #D8DDF5"></div>
<div class="a" style="left:284px;top:388px;width:269px;height:56px;background:#fff;border:1px solid #E0E0F0"></div>
<div class="a" style="left:555px;top:383px;width:66px;height:66px;background:#fff;border-radius:50%;border:2px solid #D8DDF5"></div>
<div class="a t" style="left:160.00px;top:405.92px;line-height:19px;color:#3A8AE0;font-family:'Liberation Sans';font-size:19px;font-weight:bold;;transform:scaleX(0.6208);transform-origin:0 0;">View transform</div>
<div class="a t" style="left:300.00px;top:398.92px;line-height:19px;color:#3A8AE0;font-family:'Liberation Sans';font-size:19px;font-weight:bold;;transform:scaleX(0.8575);transform-origin:0 0;">Overall plan, seeking the best</div>
<div class="a t" style="left:330.00px;top:416.92px;line-height:19px;color:#3A8AE0;font-family:'Liberation Sans';font-size:19px;font-weight:bold;;transform:scaleX(0.8767);transform-origin:0 0;">spatial perspective</div>
<div class="a t" style="left:562.00px;top:405.92px;line-height:19px;color:#3A8AE0;font-family:'Liberation Sans';font-size:19px;font-weight:bold;;transform:scaleX(0.9104);transform-origin:0 0;">shape</div>
<div class="a t" style="left:680.00px;top:212.30px;line-height:15px;color:#3A8AE0;font-family:'Liberation Sans';font-size:15px;font-weight:bold;;transform:scaleX(0.5816);transform-origin:0 0;">algorithm of projection</div>
<div class="a t" style="left:680.00px;top:257.30px;line-height:15px;color:#3A8AE0;font-family:'Liberation Sans';font-size:15px;font-weight:bold;;transform:scaleX(0.6122);transform-origin:0 0;">algorithm of projection</div>
<div class="a t" style="left:680.00px;top:367.30px;line-height:15px;color:#3A8AE0;font-family:'Liberation Sans';font-size:15px;font-weight:bold;;transform:scaleX(0.4285);transform-origin:0 0;">algorithm of projection</div>
<div class="a t" style="left:680.00px;top:432.30px;line-height:15px;color:#3A8AE0;font-family:'Liberation Sans';font-size:15px;font-weight:bold;;transform:scaleX(0.5816);transform-origin:0 0;">algorithm of projection</div>
<div class="a t" style="left:740.00px;top:459.84px;line-height:12px;color:#3A8AE0;font-family:'Liberation Sans';font-size:12px;font-weight:normal;;transform:scaleX(0.9831);transform-origin:0 0;">&lt;CDG&gt;</div></div>
<div class="a" style="left:28.3px;top:571.9px;width:126.5px;height:72px;border:1px solid #CDCDCD;background:#fff"></div>
<div class="a t" style="left:10.00px;top:569.00px;line-height:13px;color:#444;font-family:'Liberation Sans';font-size:13px;font-weight:normal;;">6</div>
<div class="a" style="left:29px;top:572.5px;width:884px;height:497px;overflow:hidden;transform:scale(0.14208);transform-origin:0 0;background:#fff"><div class="a t" style="left:360.50px;top:34.61px;line-height:30px;color:#1F6FC0;font-family:'Liberation Sans';font-size:30px;font-weight:bold;-webkit-text-stroke:1.5px #1F6FC0;transform:scaleX(1.1806);transform-origin:0 0;">A Case Study</div>
<div class="a" style="left:812px;top:9px;width:60px;height:52px;border-radius:50%;background:radial-gradient(circle,#B07A20 0%,#C89540 35%,#E8C878 65%,#F2DDA0 100%)"></div>
<div class="a t" style="left:95.00px;top:104.09px;line-height:19px;color:#444;font-family:'Liberation Serif';font-size:19px;font-weight:bold;-webkit-text-stroke:0.8px #444;transform:scaleX(1.0262);transform-origin:0 0;">Given two skew lines in the space, describe the distance of line AB and line CD</div>
<div class="a t" style="left:95.00px;top:130.09px;line-height:19px;color:#223a80;font-family:'Liberation Serif';font-size:19px;font-weight:bold;-webkit-text-stroke:0.8px #223a80;transform:scaleX(0.9391);transform-origin:0 0;">The problem is to find their common perpendicular line (KM), located within the surface</div>
<div class="a t" style="left:99.00px;top:182.09px;line-height:19px;color:#555;font-family:'Liberation Serif';font-size:19px;font-weight:bold;;transform:scaleX(1.0087);transform-origin:0 0;">Three methods:</div>
<div class="a t" style="left:99.00px;top:216.44px;line-height:15px;color:#444;font-family:'Liberation Serif';font-size:15px;font-weight:bold;;transform:scaleX(1.2386);transform-origin:0 0;">I.&nbsp;&nbsp;&nbsp;&nbsp;&nbsp;MP</div>
<div class="a t" style="left:99.00px;top:246.44px;line-height:15px;color:#444;font-family:'Liberation Serif';font-size:15px;font-weight:bold;;transform:scaleX(1.2546);transform-origin:0 0;">II.&nbsp;&nbsp;&nbsp;&nbsp;CMS</div>
<div class="a t" style="left:99.00px;top:280.44px;line-height:15px;color:#444;font-family:'Liberation Serif';font-size:15px;font-weight:bold;;transform:scaleX(1.1626);transform-origin:0 0;">III.&nbsp;&nbsp;&nbsp;Algebraic method</div>
<svg class="a" style="left:400px;top:195px;" width="220" height="220" viewBox="0 0 220 220"><path d="M17 201L97 24M173 8L192 191M55 120L181 138" stroke="#111" stroke-width="7" fill="none"/><text x="-5" y="206" font-size="22" font-weight="bold" fill="#111">C</text><text x="92" y="20" font-size="22" font-weight="bold" fill="#111">D</text><text x="178" y="14" font-size="22" font-weight="bold" fill="#111">A</text><text x="40" y="120" font-size="20" font-weight="bold" fill="#111">K</text><text x="186" y="146" font-size="20" font-weight="bold" fill="#111">M</text><text x="190" y="212" font-size="22" font-weight="bold" fill="#111">B</text></svg>
<div class="a" style="left:40px;top:476px;width:40px;height:4px;background:#C8C8C8"></div>
<div class="a" style="left:440px;top:476px;width:3px;height:4px;background:#8AB"></div></div>
<div class="a" style="left:28.3px;top:659.1999999999999px;width:126.5px;height:72px;border:1px solid #CDCDCD;background:#fff"></div>
<div class="a t" style="left:10.00px;top:656.30px;line-height:13px;color:#444;font-family:'Liberation Sans';font-size:13px;font-weight:normal;;">7</div>
<div class="a" style="left:29px;top:659.8px;width:884px;height:497px;overflow:hidden;transform:scale(0.14208);transform-origin:0 0;background:#fff"><div class="a t" style="left:316.00px;top:38.61px;line-height:30px;color:#1F6FC0;font-family:'Liberation Sans';font-size:30px;font-weight:bold;-webkit-text-stroke:1.5px #1F6FC0;transform:scaleX(1.2157);transform-origin:0 0;">The Method of DG</div>
<div class="a" style="left:812px;top:9px;width:60px;height:52px;border-radius:50%;background:radial-gradient(circle,#B07A20 0%,#C89540 35%,#E8C878 65%,#F2DDA0 100%)"></div>
<div class="a" style="left:39px;top:122px;width:9px;height:9px;background:#1F6FC0"></div>
<div class="a t" style="left:55.00px;top:119.61px;line-height:17px;color:#3050A0;font-family:'Liberation Sans';font-size:17px;font-weight:bold;;transform:scaleX(0.9887);transform-origin:0 0;">Three basic methods of DG drawings</div>
<div class="a t" style="left:45.00px;top:149.46px;line-height:16px;color:#555;font-family:'Liberation Sans';font-size:16px;font-weight:bold;;transform:scaleX(0.8874);transform-origin:0 0;">&bull; Projection DG to a perpendicular line</div>
<div class="a t" style="left:45.00px;top:175.46px;line-height:16px;color:#555;font-family:'Liberation Sans';font-size:16px;font-weight:bold;;transform:scaleX(0.9633);transform-origin:0 0;">&bull; These methods a perpendicular which uses the constructions of lines</div>
<svg class="a" style="left:585px;top:75px;" width="220" height="140" viewBox="0 0 220 140"><path d="M15 95L45 5M50 95L85 0M20 55L85 50" stroke="#222" stroke-width="6" fill="none"/><path d="M110 60A30 30 0 0 1 165 55" stroke="#3C8CE0" stroke-width="6" fill="none"/><path d="M145 130L165 75M175 130L195 80M150 110L200 105" stroke="#222" stroke-width="6" fill="none"/></svg></div>
<div class="a" style="left:0px;top:690px;width:1180px;height:16px;background:#F3F3F3"></div>
<div class="a t " style="left:6.4px;top:693.99px;font-size:9.3px;line-height:11.62px;color:#444;">幻灯片 第 1 张，共 15 张</div>
<svg class="a" style="left:122px;top:692px;" width="13" height="11" viewBox="0 0 13 11"><rect x="0.5" y="0.5" width="11" height="9" fill="none" stroke="#777" stroke-width="0.9"/><path d="M4 0.5V9.5" stroke="#777" stroke-width="0.9"/><path d="M6.5 3L9.5 6M9.5 3L6.5 6" stroke="#777" stroke-width="0.8"/></svg>
<div class="a t " style="left:148.7px;top:693.99px;font-size:9.3px;line-height:11.62px;color:#444;">中文(中国)</div>
<svg class="a" style="left:203px;top:692px;" width="14" height="12" viewBox="0 0 14 12"><path d="M6 1.5A5 5 0 1 0 6 10.5" fill="none" stroke="#555" stroke-width="1"/><path d="M7 5L12 10M12 5L7 10" stroke="#333" stroke-width="1.1"/></svg>
<div class="a t " style="left:217.4px;top:693.99px;font-size:9.3px;line-height:11.62px;color:#444;">辅助功能: 调查</div>
<svg class="a" style="left:810px;top:692px;" width="10" height="11" viewBox="0 0 10 11"><path d="M1 6L5 2L9 6Z" fill="#777"/><path d="M0.5 8H9.5M0.5 10H9.5" stroke="#777" stroke-width="0.9"/></svg>
<div class="a t " style="left:823px;top:693.99px;font-size:9.3px;line-height:11.62px;color:#444;">备注</div>
<svg class="a" style="left:856px;top:692px;" width="12" height="11" viewBox="0 0 12 11"><path d="M1 0.5H11A0.5 0.5 0 0 1 11.5 1V7.5H4L1.5 10.5V7.5H0.5V1Z" fill="#555"/></svg>
<div class="a t " style="left:869.6px;top:693.99px;font-size:9.3px;line-height:11.62px;color:#444;">批注</div>
<div class="a" style="left:903px;top:690.5px;width:31px;height:15.5px;background:#CFCFCF"></div>
<svg class="a" style="left:912px;top:692px;" width="12" height="11" viewBox="0 0 12 11"><rect x="0.5" y="0.5" width="10.5" height="10" fill="none" stroke="#777" stroke-width="0.9"/><path d="M3 0.5V10.5" stroke="#777" stroke-width="0.9"/><rect x="5" y="2.5" width="4" height="3.5" fill="none" stroke="#777" stroke-width="0.8"/></svg>
<svg class="a" style="left:942px;top:692px;" width="12" height="11" viewBox="0 0 12 11"><rect x="0.5" y="0.5" width="4.5" height="4" fill="none" stroke="#777" stroke-width="0.9"/><rect x="7" y="0.5" width="4.5" height="4" fill="none" stroke="#777" stroke-width="0.9"/><rect x="0.5" y="6.5" width="4.5" height="4" fill="none" stroke="#777" stroke-width="0.9"/><rect x="7" y="6.5" width="4.5" height="4" fill="none" stroke="#777" stroke-width="0.9"/></svg>
<svg class="a" style="left:974px;top:692px;" width="12" height="11" viewBox="0 0 12 11"><path d="M0.5 0.5H11.5V10.5H0.5Z M6 0.5V10.5" fill="none" stroke="#777" stroke-width="0.9"/><path d="M2 3H4.5M2 5H4.5M7.5 3H10M7.5 5H10" stroke="#777" stroke-width="0.7"/></svg>
<svg class="a" style="left:1005px;top:692px;" width="11" height="12" viewBox="0 0 11 12"><path d="M0 0.8H11" stroke="#777" stroke-width="1"/><rect x="1" y="1" width="9" height="6.5" fill="none" stroke="#777" stroke-width="0.9"/><path d="M3 4H8" stroke="#777" stroke-width="0.8"/><path d="M5.5 7.5V10.5M3.5 11H7.5" stroke="#777" stroke-width="0.9"/></svg>
<div class="a" style="left:1030px;top:698px;width:6px;height:1px;background:#AAA"></div>
<div class="a" style="left:1040px;top:697.5px;width:77px;height:1px;background:#666"></div>
<div class="a" style="left:1072px;top:694px;width:4px;height:9px;background:#666"></div>
<div class="a" style="left:1078px;top:695.5px;width:1px;height:5px;background:#666"></div>
<svg class="a" style="left:1120px;top:695px;" width="7" height="7" viewBox="0 0 7 7"><path d="M3.5 0V7M0 3.5H7" stroke="#999" stroke-width="0.9"/></svg>
<div class="a t " style="left:1136.3px;top:693.42px;font-size:10.2px;line-height:12.75px;color:#444;">90%</div>
<svg class="a" style="left:1165px;top:692.5px;" width="10" height="10" viewBox="0 0 10 10"><rect x="0.5" y="0.5" width="9" height="9" fill="none" stroke="#A8A8A8" stroke-width="0.9"/><path d="M2 2L4 4M8 2L6 4M2 8L4 6M8 8L6 6" stroke="#A8A8A8" stroke-width="0.9"/></svg>
<div class="a" style="left:0px;top:706px;width:1180px;height:31px;background:#1F1F1F"></div>
<svg class="a" style="left:12px;top:715px;" width="13" height="13" viewBox="0 0 13 13"><rect x="0" y="0" width="6" height="6" fill="#fff"/><rect x="7" y="0" width="6" height="6" fill="#fff"/><rect x="0" y="7" width="6" height="6" fill="#fff"/><rect x="7" y="7" width="6" height="6" fill="#fff"/></svg>
<div class="a" style="left:37px;top:706px;width:221px;height:31px;background:#F2F2F2"></div>
<svg class="a" style="left:45px;top:714px;" width="14" height="14" viewBox="0 0 14 14"><circle cx="8.5" cy="5.5" r="4.5" fill="none" stroke="#222" stroke-width="1.3"/><path d="M5.3 8.7L1 13" stroke="#222" stroke-width="1.5"/></svg>
<div class="a t " style="left:67.4px;top:715.71px;font-size:11.5px;line-height:14.38px;color:#222;">搜索</div>
<svg class="a" style="left:200px;top:708px;" width="56" height="28" viewBox="0 0 56 28"><defs><radialGradient id="gp" cx="0.5" cy="0.5" r="0.5"><stop offset="0" stop-color="#C86A20"/><stop offset="0.45" stop-color="#B0561C"/><stop offset="0.7" stop-color="#4A2060"/><stop offset="1" stop-color="#3A2A60" stop-opacity="0"/></radialGradient><radialGradient id="go" cx="0.5" cy="0.5" r="0.5"><stop offset="0" stop-color="#FFB030"/><stop offset="0.6" stop-color="#F08A20" stop-opacity="0.8"/><stop offset="1" stop-color="#E07010" stop-opacity="0"/></radialGradient></defs><g transform="rotate(-9 28 14)"><ellipse cx="28" cy="14.5" rx="28" ry="14" fill="url(#gp)"/><ellipse cx="19" cy="16" rx="15" ry="9" fill="url(#go)"/><ellipse cx="42" cy="12" rx="11" ry="7" fill="url(#go)"/><ellipse cx="19.5" cy="16" rx="8" ry="4.4" fill="#E0E8D8"/><ellipse cx="19.5" cy="16.5" rx="5.6" ry="2.3" fill="#050505"/><ellipse cx="43" cy="11" rx="5" ry="3" fill="#E0E8D8"/><ellipse cx="43" cy="11.4" rx="3.2" ry="1.5" fill="#050505"/></g><circle cx="10" cy="5" r="0.7" fill="#fff"/><circle cx="36" cy="19" r="0.9" fill="#fff"/><circle cx="21" cy="4" r="0.6" fill="#fff"/></svg>
<svg class="a" style="left:269px;top:715px;" width="14" height="13" viewBox="0 0 14 13"><rect x="0.5" y="2.5" width="9" height="8" fill="none" stroke="#fff" stroke-width="1"/><path d="M12 0V13" stroke="#fff" stroke-width="1"/><path d="M0.5 0.5H9.5M0.5 12.5H9.5" stroke="#fff" stroke-width="1"/></svg>
<svg class="a" style="left:306px;top:712px;" width="19" height="17" viewBox="0 0 19 17"><path d="M0.5 2H7L9 4H18.5V16H0.5Z" fill="#F7C64A"/><rect x="0.5" y="5.5" width="18" height="10.5" fill="#FFD966"/><rect x="5" y="9" width="9" height="3.5" fill="#3A8EDB"/></svg>
<div class="a" style="left:300px;top:735px;width:32px;height:2px;background:#76B9ED"></div>
<svg class="a" style="left:345px;top:712px;" width="18" height="18" viewBox="0 0 18 18"><defs><linearGradient id="eg" x1="0" y1="0" x2="1" y2="1"><stop offset="0" stop-color="#36C5F0"/><stop offset="0.6" stop-color="#1E7FD8"/><stop offset="1" stop-color="#2EBA5E"/></linearGradient></defs><circle cx="9" cy="9" r="8.5" fill="url(#eg)"/><path d="M4 10C4 6 8 4.5 11 5.5C14 6.5 14.5 9.5 12 10H6.5C7 13 11 14 14.5 12" fill="none" stroke="#fff" stroke-width="1.8" opacity="0.8"/></svg>
<svg class="a" style="left:383px;top:712px;" width="18" height="18" viewBox="0 0 18 18"><circle cx="9" cy="9" r="8.5" fill="#DB4437"/><path d="M9 9L1.6 13.25A8.5 8.5 0 0 0 9 17.5Z" fill="#0F9D58"/><path d="M9 9L1.6 13.25A8.5 8.5 0 0 1 1.6 4.75L4.3 9Z" fill="#0F9D58"/><path d="M9 9L9 17.5A8.5 8.5 0 0 0 16.4 4.75Z" fill="#F4B400"/><path d="M9 9H16.4A8.5 8.5 0 0 1 9 17.5Z" fill="#F4B400"/><circle cx="9" cy="9" r="4" fill="#fff"/><circle cx="9" cy="9" r="3.1" fill="#4285F4"/></svg>
<div class="a" style="left:377px;top:735px;width:31px;height:2px;background:#76B9ED"></div>
<svg class="a" style="left:421px;top:711px;" width="18" height="19" viewBox="0 0 18 19"><path d="M9 1L16.5 5.2V13.8L9 18L1.5 13.8V5.2Z" fill="none" stroke="#fff" stroke-width="1.3"/><path d="M9 5L13 7.3V11.7L9 14L5 11.7V7.3Z M5 7.3L9 9.5L13 7.3M9 9.5V14" fill="none" stroke="#fff" stroke-width="1.1"/></svg>
<svg class="a" style="left:458px;top:712px;" width="20" height="18" viewBox="0 0 20 18"><ellipse cx="7.5" cy="7" rx="7" ry="6" fill="#2DC100"/><ellipse cx="13" cy="11.5" rx="6.2" ry="5.2" fill="#E8E8E8"/><circle cx="5" cy="5.5" r="0.9" fill="#1F1F1F"/><circle cx="9.5" cy="5.5" r="0.9" fill="#1F1F1F"/></svg>
<div class="a" style="left:453px;top:735px;width:31px;height:2px;background:#76B9ED"></div>
<svg class="a" style="left:496px;top:712px;" width="20" height="18" viewBox="0 0 20 18"><rect x="6" y="0.5" width="13.5" height="17" rx="1.2" fill="#2B7CD3"/><rect x="6" y="6" width="13.5" height="6" fill="#185ABD"/><rect x="6" y="12" width="13.5" height="5.5" fill="#103F91"/><rect x="0.5" y="4" width="11" height="10" rx="1" fill="#185ABD"/><text x="1.6" y="12" font-size="8" font-weight="bold" fill="#fff" font-family="Liberation Sans">W</text></svg>
<div class="a" style="left:491px;top:735px;width:31px;height:2px;background:#76B9ED"></div>
<svg class="a" style="left:535px;top:712px;" width="20" height="18" viewBox="0 0 20 18"><path d="M8 3A7 7 0 1 1 3 12" fill="none" stroke="#2A8FE8" stroke-width="2.6"/><path d="M2 4L8 7L3.5 10Z" fill="#F3B030"/></svg>
<div class="a" style="left:529px;top:735px;width:31px;height:2px;background:#76B9ED"></div>
<div class="a" style="left:563.6px;top:706px;width:37.5px;height:31px;background:#3D3D3D"></div>
<svg class="a" style="left:573px;top:712px;" width="20" height="18" viewBox="0 0 20 18"><circle cx="11" cy="9" r="8.5" fill="#ED6C47"/><path d="M11 0.5A8.5 8.5 0 0 1 19.5 9H11Z" fill="#FF8F6B"/><path d="M11 9H19.5A8.5 8.5 0 0 1 11 17.5Z" fill="#D35230"/><rect x="0.5" y="4" width="11" height="10" rx="1" fill="#C43E1C"/><text x="3" y="12" font-size="8" font-weight="bold" fill="#fff" font-family="Liberation Sans">P</text></svg>
<div class="a" style="left:563.6px;top:735px;width:37.5px;height:2px;background:#76B9ED"></div>
<svg class="a" style="left:995.5px;top:717px;" width="11" height="7" viewBox="0 0 11 7"><path d="M0.5 6.5L5.5 1L10.5 6.5" fill="none" stroke="#fff" stroke-width="1.1"/></svg>
<svg class="a" style="left:1013.5px;top:714.5px;" width="14" height="13" viewBox="0 0 14 13"><path d="M1 3L11 1V11L1 12Z" fill="none" stroke="#fff" stroke-width="1"/><text x="3.5" y="9" font-size="6.5" fill="#fff" font-family="Liberation Sans">e</text><circle cx="10.5" cy="10.5" r="2.3" fill="#E81123"/></svg>
<svg class="a" style="left:1031px;top:717px;" width="15" height="8" viewBox="0 0 15 8"><rect x="2.5" y="1" width="10.5" height="6" fill="#fff"/><path d="M0 2H2.5M0 6H2.5M13 3V5" stroke="#fff" stroke-width="1"/></svg>
<svg class="a" style="left:1049px;top:716px;" width="14" height="10" viewBox="0 0 14 10"><path d="M0.5 3H3L6 0.5V9.5L3 7H0.5Z" fill="none" stroke="#fff" stroke-width="0.9"/><path d="M8.5 3L12.5 7M12.5 3L8.5 7" stroke="#fff" stroke-width="0.9"/></svg>
<div class="a t " style="left:1066px;top:714.88px;font-size:12.2px;line-height:15.25px;color:#fff;">英</div>
<div class="a t" style="left:1080.5px;width:60px;text-align:center;top:708.76px;font-size:10.3px;line-height:12.88px;color:#fff;">12:02</div>
<div class="a t" style="left:1070.5px;width:80px;text-align:center;top:722.26px;font-size:10.3px;line-height:12.88px;color:#fff;">2023/8/17</div>
<svg class="a" style="left:1148px;top:713px;" width="19" height="20" viewBox="0 0 19 20"><path d="M0.5 0.5H12V8.5H4L1.5 11V8.5H0.5Z" fill="#fff"/><path d="M2.5 3H10M2.5 5.5H8" stroke="#1F1F1F" stroke-width="0.9"/><circle cx="13" cy="13.5" r="5.5" fill="#1F1F1F" stroke="#888" stroke-width="0.8"/><text x="10.4" y="17" font-size="8.5" font-weight="bold" fill="#fff" font-family="Liberation Sans">6</text></svg>
<div class="a" style="left:1176.5px;top:706px;width:1px;height:31px;background:#555"></div>
</body></html>
